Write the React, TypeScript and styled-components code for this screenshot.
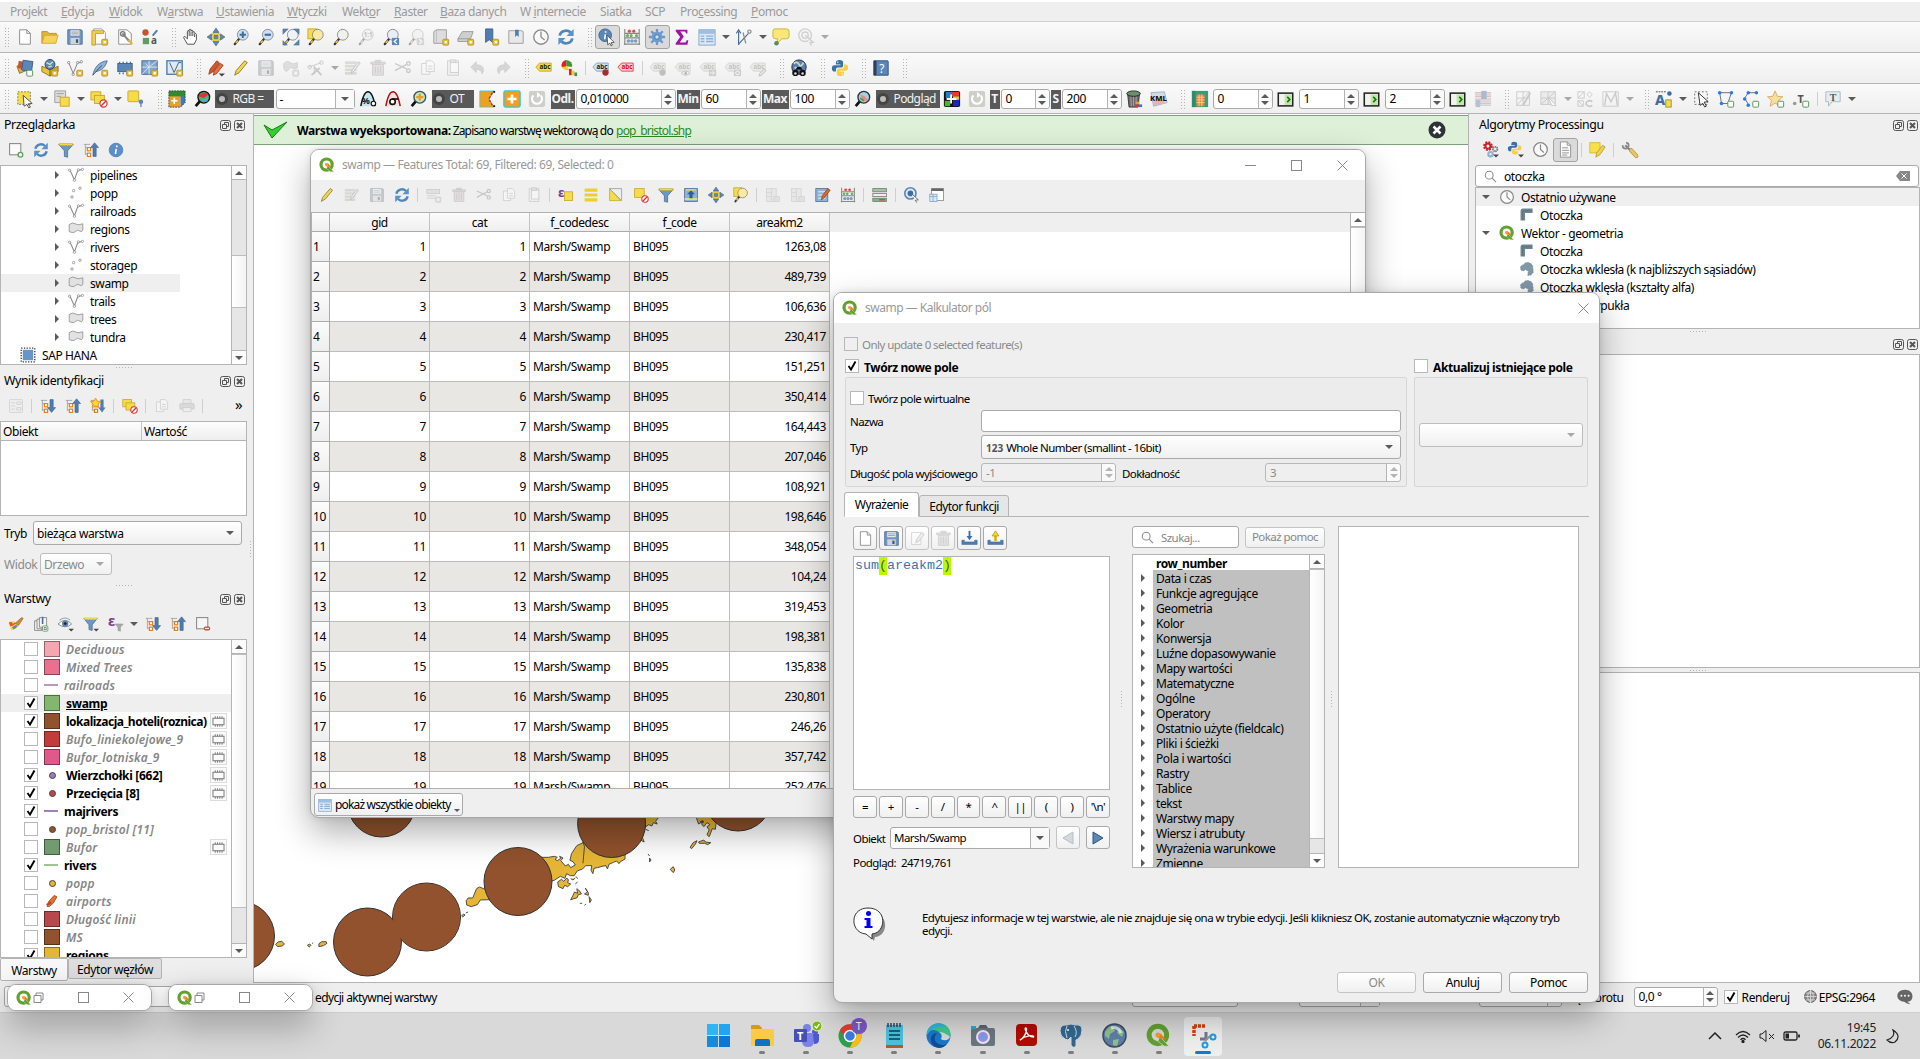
import React, { ReactNode } from 'react';
import styled, { createGlobalStyle, css } from 'styled-components';

const Global = createGlobalStyle`
  *, *::before, *::after { box-sizing: border-box; }
  body { margin: 0; background: #fff; overflow: hidden; }
  #root { font: 12px/18px "Noto Sans", "Liberation Sans", sans-serif; letter-spacing: -0.4px; color: #000; }
  svg { display: block; flex: none; }
  svg text { letter-spacing: 0; }
`;

/* ---------- icons ---------- */

const Lens = ({ fill = '#d9e6f3', children }: { fill?: string; children?: ReactNode }) => (
  <g>
    <path d="M8 12L3 18" stroke="#333" strokeWidth="2.4" strokeLinecap="round" />
    <path d="M6.4 14L4.2 16.6" stroke="#e8c33c" strokeWidth="1.8" />
    <circle cx="12" cy="7.5" r="6" fill={fill} stroke="#888" />
    {children}
  </g>
);
const Badge = ({ c = '#e8c33c', b = '#b3922a' }: { c?: string; b?: string }) => (
  <g>
    <rect x="12" y="12.5" width="6.5" height="6.5" rx="1" fill={c} stroke={b} />
    <rect x="14" y="14.5" width="2.5" height="2.5" fill="#fff" />
  </g>
);
const GreenBadge = () => <Badge c="#fff" b="#4f8f4f" />;
const Caret = () => <path d="M13 16h7l-3.5 3.5z" fill="#444" />;
const TagIcon = ({ fill, stroke, color = '#222', children }: { fill: string; stroke: string; color?: string; children?: ReactNode }) => (
  <g>
    <path d="M1 9l4-4.5h13v9H5z" fill={fill} stroke={stroke} />
    <text x="5" y="11.6" fontSize="7" fontWeight="700" fill={color} fontFamily="Noto Sans, sans-serif">abc</text>
    {children}
  </g>
);
const TreeLines = () => (
  <g>
    <path d="M3 3v13M3 7h5M3 15h5" stroke="#999" fill="none" />
    <path d="M1 3h8" stroke="#999" />
    <rect x="5.5" y="7" width="4" height="4" fill="#fff" stroke="#e8821e" strokeWidth="1.5" />
    <rect x="5.5" y="14" width="4" height="4" fill="#fff" stroke="#e8821e" strokeWidth="1.5" />
  </g>
);
const Circ3 = () => (
  <g fill="#fff" stroke="#888">
    <circle cx="8" cy="17" r="1.3" /><circle cx="3" cy="4" r="1.3" /><circle cx="13" cy="4" r="1.3" /><circle cx="17" cy="3" r="1.3" />
  </g>
);

const icons: Record<string, ReactNode> = {
  new: <path d="M4 2h8l4 4v12H4zM12 2v4h4" fill="#fff" stroke="#888" />,
  open: <g><path d="M1 17V4h6l2 2h8v3" fill="#e0b53a" stroke="#b98f20" /><path d="M1 17l3-9h15l-2.5 9z" fill="#f6d25e" stroke="#d2a735" /></g>,
  save: <g><path d="M2 2h15l1 1v15H2z" fill="#6d97c4" stroke="#4c6e94" /><rect x="5" y="2.5" width="10" height="6" fill="#e8e8e8" /><path d="M6 4.5h8M6 6.5h8" stroke="#999" /><rect x="5" y="11" width="10" height="7" fill="#cfd5db" /><rect x="11" y="12.5" width="2.5" height="4" fill="#456" /></g>,
  layout: <g><path d="M3 1h9l4 4v13H3z" fill="#fff" stroke="#999" /><path d="M1 3h13v3H5v13H1z" fill="#f3d052" stroke="#c69b28" /><Badge /></g>,
  layouts: <g><path d="M3 2h9l5 4v12H3z" fill="#fff" stroke="#888" /><path d="M7 6l8 9" stroke="#888" strokeWidth="2.4" /><path d="M14 13l4 5" stroke="#e2b83a" strokeWidth="2.6" /><circle cx="7.5" cy="6.5" r="2.5" fill="none" stroke="#777" strokeWidth="1.5" /></g>,
  style: <g><circle cx="5" cy="5" r="3.5" fill="#c9532c" /><path d="M12 8l5-6 2 1-5 6z" fill="#5b7ea6" /><rect x="2" y="11" width="7" height="7" fill="#5f9c5f" /><text x="11" y="18" fontSize="11" fontWeight="700" fill="#555" fontFamily="Noto Sans, sans-serif">a</text></g>,
  hand: <path d="M6 18l-4-7c-.8-1.6 1-2 1.8-1L6 12V4c0-1.600 2-1.600 2 0V2.500c0-1.500 2-1.500 2 0V3.500c0-1.500 2-1.400 2 0V5c0-1.300 2-1.200 2 0l2 2v6l-2.500 5zM8 4v5M10 4v5M12 5v4M14 6v4" fill="#fff" stroke="#333" strokeWidth=".9" />,
  pan: <g><path d="M10 3l7 7-7 7-7-7z" fill="#f3d438" stroke="#c69b28" /><g fill="#5b86b8" stroke="#3f628a" strokeWidth=".6"><path d="M10 0l3.500 5h-7zM10 20l3.500-5h-7zM0 10l5-3.500v7zM20 10l-5-3.500v7z" /><path d="M8 8h4v4H8z" /></g></g>,
  zin: <Lens fill="#cfe0f2"><path d="M12 4v7M8.500 7.500h7" stroke="#3c6ea5" strokeWidth="2.200" /></Lens>,
  zout: <Lens fill="#cfe0f2"><path d="M8.500 7.500h7" stroke="#3c6ea5" strokeWidth="2.400" /></Lens>,
  zfull: <g><Lens fill="#eef3f8" /><g fill="#5b86b8" stroke="#3f628a" strokeWidth=".5"><path d="M1 1h6L1 7zM19 1v6l-6-6zM19 19h-6l6-6zM1 19v-5l5 5z" /></g></g>,
  zsel: <g><rect x="1" y="1" width="10" height="11" fill="#f4dc4a" stroke="#c9a52c" /><Lens fill="#faeaa0" /></g>,
  zlayer: <Lens fill="#f1f1ec" />,
  znat: <Lens fill="#eee"><text x="7.500" y="10" fontSize="7" fontWeight="700" fill="#666" fontFamily="Noto Sans, sans-serif">1:1</text></Lens>,
  zlast: <g><Lens fill="#e8eef3" /><rect x="11" y="11" width="8" height="8" fill="#5b86b8" /><path d="M16.500 12.500l-3 2.500 3 2.500" stroke="#fff" strokeWidth="1.400" fill="none" /></g>,
  znext: <g><Lens fill="#eee" /><rect x="11" y="11" width="8" height="8" fill="#aaa" /><path d="M13.500 12.500l3 2.500-3 2.500" stroke="#fff" strokeWidth="1.400" fill="none" /></g>,
  newmap: <g><path d="M2 4l3-2h11v13l-2 2H2z" fill="#ddd" stroke="#999" /><path d="M5 2v14" stroke="#bbb" /><Badge /></g>,
  new3d: <g><path d="M1 12L6 4h12l-3 8zM1 12v3h14v-3" fill="#cfcfcf" stroke="#999" /><Badge /></g>,
  bmadd: <g><path d="M4 1h8v15l-4-3-4 3z" fill="#4f7db0" stroke="#3b6190" /><Badge /></g>,
  bm: <g><path d="M2 3h14l2 1v13H2z" fill="#e8e8e8" stroke="#999" /><path d="M9 2h4v8l-2-2-2 2z" fill="#4f7db0" /></g>,
  clock: <g fill="none" stroke="#888"><circle cx="10" cy="10" r="8" fill="#fafafa" strokeWidth="1.500" /><path d="M10 4v6l4 3.500" strokeWidth="1.400" /></g>,
  refresh: <g fill="none" stroke="#4f86bd" strokeWidth="3"><path d="M3 8.500A7 6.500 0 0 1 15 5" /><path d="M17 11.500A7 6.500 0 0 1 5 15" /><path d="M18.500 1v8h-8z" fill="#5b92cb" stroke="none" /><path d="M1.500 19v-8h8z" fill="#5b92cb" stroke="none" /></g>,
  identify: <g><circle cx="8" cy="8" r="7" fill="#5b86b8" stroke="#3f628a" /><path d="M8.500 3.500v1.800M8.200 7l-.8 5.500" stroke="#fff" strokeWidth="1.800" /><path d="M10 8l8 8-3.500.3L16 19l-1.500.8-1.400-3-2.300 2z" fill="#fff" stroke="#333" strokeWidth=".8" /></g>,
  abacus: <g><path d="M2 1v18M18 1v18M2 6h16M2 11h16M1 18h18" stroke="#888" strokeWidth="1.300" /><g fill="#d94b43"><circle cx="7" cy="3.500" r="1.700" /><circle cx="12" cy="3.500" r="1.700" /></g><g fill="#6bb06b"><circle cx="5" cy="8.500" r="1.700" /><circle cx="9" cy="8.500" r="1.700" /><circle cx="15" cy="8.500" r="1.700" /></g><g fill="#7b9bc0"><circle cx="6" cy="14.500" r="2" /><circle cx="10" cy="14.500" r="2" /><circle cx="14" cy="14.500" r="2" /></g></g>,
  gear: <g><path d="M10 1v18M1 10h18M3.600 3.600l12.800 12.800M16.400 3.600L3.600 16.400" stroke="#6d97c8" strokeWidth="2.600" /><circle cx="10" cy="10" r="6" fill="#6d9cd0" /><circle cx="10" cy="10" r="2.500" fill="#cfe0f2" stroke="#47719f" /></g>,
  sigma: <path d="M3 2h13v4h-1.500l-1-2H8l4 5.500L7.500 16H14l1.200-2.500H17L16 18.500H3V17l5-7-5-6.500z" fill="#a012a0" />,
  table: <g><rect x="1" y="2" width="18" height="17" fill="#dbe9f7" stroke="#7fa3c8" /><rect x="1" y="2" width="18" height="4.500" fill="#9cc0e4" /><path d="M3 9h4M9 9h8M3 12h4M9 12h8M3 15h4M9 15h8" stroke="#8bb0d6" strokeWidth="1.600" /></g>,
  measure: <g fill="none" stroke="#4c6e94" strokeWidth="1.300"><path d="M4 19V4M1.500 6L4 2l2.500 4" /><path d="M4 18l11-12" /><path d="M9 5l3 12" stroke="#888" /><circle cx="16" cy="4" r="1.800" stroke="#888" /></g>,
  bubble: <g><path d="M3 1h13q3 0 3 3v5q0 3-3 3h-5l-5 5v-5H4q-3 0-3-3V4q0-3 2-3z" fill="#f9e878" stroke="#c9ae35" /><circle cx="5" cy="17" r="2.500" fill="#5a8a5a" /></g>,
  pin: <g fill="none" stroke="#999" strokeWidth="1.500"><circle cx="9" cy="8" r="7" /><circle cx="9" cy="8" r="3.500" /><path d="M9 8l9 8-3.500.5L16 19.500" fill="#eee" /></g>,
  data: <g><path d="M1 8l9-5 3 9-9 4z" fill="#e0b53a" stroke="#8e6c20" /><path d="M3 2l8 2-1 8-8-2z" fill="#c9532c" /><rect x="7" y="2" width="11" height="11" fill="#5b86b8" stroke="#3f628a" transform="rotate(8 12 8)" /><GreenBadge /></g>,
  gpkg: <g><path d="M1 8l9 4v7l-9-5z" fill="#e8c33c" stroke="#8e6c20" /><path d="M10 12l9-4v6l-9 5z" fill="#d2a735" stroke="#8e6c20" /><circle cx="10" cy="6" r="5.500" fill="#5b86b8" stroke="#345" /><path d="M6 4l4 2 3-3M8 9l4-1" stroke="#cfe3c0" strokeWidth="1.500" fill="none" /><Badge /></g>,
  vline: <g><path d="M3 4l5 12 5-12h4" fill="none" stroke="#777" /><Circ3 /><Badge /></g>,
  feather: <g><path d="M2 18C4 9 9 3 18 2c-2 7-6 11-13 12" fill="#8fb2d6" stroke="#4c6e94" /><path d="M2 18L12 7" stroke="#345" /><Badge /></g>,
  chip: <g><path d="M4 5v-2M8 5v-2M12 5v-2M16 5v-2M4 15v2M8 15v2M12 15v2" stroke="#456f9f" strokeWidth="1.500" /><rect x="2" y="5" width="16" height="9" fill="#5b86b8" stroke="#3f628a" /><Badge /></g>,
  mesh: <g><rect x="1" y="2" width="17" height="15" fill="#7fa6d0" stroke="#3f628a" /><path d="M1 9h17M9 2v15M1 17l8-8M9 9l9-7M9 9L5 5" stroke="#dce9f6" strokeWidth="1" /><Badge /></g>,
  vvirt: <g><rect x="1" y="2" width="17" height="15" fill="#dce9f6" stroke="#4c7cb0" strokeWidth="1.500" /><path d="M4 4l5 11 5-11h3" fill="none" stroke="#456" /><Badge /></g>,
  pencils: <g><path d="M2 17l1.500-6L11 2l3 2.500L7 14z" fill="#d9542a" stroke="#7e2f16" strokeWidth=".8" /><path d="M7 18l1-5 7-8 3 2-7 9z" fill="#e8703a" stroke="#7e2f16" strokeWidth=".8" /><Caret /></g>,
  pencil: <path d="M3 18l1.500-5L14 2l3 2L8 15z" fill="#f0d650" stroke="#8b7a2a" />,
  blob: <g><path d="M2 5q4-4 7-1t8 0v6q-3 2-5 0t-5 2-5-2z" fill="#bbb" stroke="#999" /><Badge c="#ccc" b="#999" /></g>,
  vertex: <g stroke="#888" fill="none"><path d="M2 9l14-5M8 7v10" /><circle cx="3" cy="9" r="2" /><circle cx="16" cy="4" r="2" /><path d="M5 18l9-8M8 9l8 9" strokeWidth="2" /></g>,
  listedit: <g><path d="M1 4h13M1 8h13M1 12h13M1 16h13" stroke="#bdb58c" strokeWidth="3" /><path d="M8 16l1-4 7-9 2 1.500-7 9z" fill="#ddd" stroke="#777" /></g>,
  addrow: <g><rect x="1" y="3" width="16" height="5" fill="#ccc" stroke="#999" /><path d="M1 11h11M1 14h11" stroke="#bbb" strokeWidth="2" /><Badge c="#ccc" b="#999" /></g>,
  trash: <g fill="#d8c4c4" stroke="#a88"><path d="M4 6h12v12H4z" /><path d="M2 3.500h16v2H2zM7 1.500h6v2H7z" /><path d="M7 8v8M10 8v8M13 8v8" /></g>,
  cut: <g fill="none" stroke="#888" strokeWidth="1.500"><path d="M1 5l13 6M1 13l13-7" /><circle cx="16" cy="5" r="2" /><circle cx="16" cy="13" r="2" /></g>,
  copy: <g fill="#fff" stroke="#999"><path d="M3 5h6l3 3v9H3z" /><path d="M8 2h6l3 3v9H8z" /><path d="M10 8h5M10 11h5" /></g>,
  paste: <g fill="#eee" stroke="#999"><rect x="4" y="2" width="12" height="16" /><rect x="7" y="4" width="9" height="11" fill="#fff" /><rect x="7" y="1" width="6" height="3" fill="#ccc" /></g>,
  undo: <path d="M8 3v3.500q9 0 8 7l-1.500 3q-.5-5-6.500-5V15L2 9z" fill="#a8a8a8" stroke="#999" />,
  redo: <path d="M12 3v3.500q-9 0-8 7l1.500 3q.5-5 6.500-5V15l6-6z" fill="#a8a8a8" stroke="#999" />,
  abc: <TagIcon fill="#f6dc4a" stroke="#c9a52c" />,
  pie: <g><path d="M7 1a6 6 0 0 0-5 8l5 2z" fill="#d22" /><path d="M7 1a7 6 0 0 1 6 8l-6-1z" fill="#3a9a3a" /><path d="M2 9l5-1 4 4q-6 2-9-3z" fill="#f2cf3a" /><rect x="10" y="11" width="3" height="7" fill="#d22" /><rect x="13" y="13" width="3" height="5" fill="#f2cf3a" /><rect x="16" y="15" width="3" height="4" fill="#3a9a3a" /></g>,
  abcb: <TagIcon fill="#cfe0f5" stroke="#7f9fc8"><circle cx="15" cy="15" r="3.500" fill="#b02a2a" /></TagIcon>,
  abcr: <TagIcon fill="#ffd0d0" stroke="#e04040" color="#d11" />,
  abc1: <TagIcon fill="#ddd8c8" stroke="#aaa" color="#777"><circle cx="15" cy="15" r="3.500" fill="#a66" /></TagIcon>,
  abc2: <TagIcon fill="#ddd8c8" stroke="#aaa" color="#777"><path d="M8 16q5-5 10 0-5 4-10 0" fill="#fff" stroke="#777" /><circle cx="13" cy="16" r="1.500" fill="#555" /></TagIcon>,
  abc3: <TagIcon fill="#ddd8c8" stroke="#aaa" color="#777"><rect x="11" y="12" width="8" height="7" fill="#999" /><path d="M12 15.500h5M15 13.500l2 2-2 2" stroke="#fff" fill="none" /></TagIcon>,
  abc4: <TagIcon fill="#ddd8c8" stroke="#aaa" color="#777"><rect x="11" y="12" width="8" height="7" fill="#999" /><circle cx="15" cy="15.500" r="2" stroke="#fff" fill="none" /></TagIcon>,
  abc5: <TagIcon fill="#ddd8c8" stroke="#aaa" color="#777"><path d="M11 19l1-3 5-5 2 2-5 5z" fill="#ccc" stroke="#777" /></TagIcon>,
  globeb: <g><circle cx="10" cy="9" r="8" fill="#5b7fae" stroke="#223" /><path d="M4 5q4-3 6 1t5-2M5 10q3-1 5 2" stroke="#cfd8c8" strokeWidth="2" fill="none" /><circle cx="6" cy="15.500" r="3.500" fill="#111" /><circle cx="14" cy="15.500" r="3.500" fill="#111" /><path d="M6 12l2-3h4l2 3" fill="#111" /><circle cx="6" cy="16" r="1.400" fill="#ddd" /><circle cx="14" cy="16" r="1.400" fill="#ddd" /></g>,
  python: <g><path d="M9.500 1q-4 0-4 3v2h5v1H3.500Q1 7 1 10.500T4 14h1.500v-2.500q0-2 2-2h4q2 0 2-2V4q0-3-4-3z" fill="#3b72a6" /><path d="M10.500 19q4 0 4-3v-2h-5v-1h7q2.500 0 2.500-3.500T16 6h-1.500v2.500q0 2-2 2h-4q-2 0-2 2V16q0 3 4 3z" fill="#f6cf45" /><circle cx="7.500" cy="3.500" r=".8" fill="#fff" /><circle cx="12.500" cy="16.500" r=".8" fill="#fff" /></g>,
  help: <g><path d="M2 2h15q1 0 1 1v15H2z" fill="#5b86b8" stroke="#2f4f77" /><path d="M2 2h3v16H2z" fill="#2f3f55" /><text x="8" y="15" fontSize="13" fill="#fff" fontFamily="Noto Sans, sans-serif">?</text></g>,
  select: <g><rect x="2" y="2" width="14" height="14" fill="#f4dc4a" stroke="#777" strokeDasharray="2 1.500" /><path d="M8 6l10 9-4.500.4L16 19l-1.800.8-2-3.800L9 18z" fill="#fff" stroke="#333" strokeWidth=".9" /></g>,
  form: <g><path d="M2 1h12v13H2z" fill="#ddd" stroke="#999" /><path d="M4 4h8M4 7h5" stroke="#999" /><rect x="8" y="8" width="10" height="10" fill="#f4dc4a" stroke="#c9a52c" /></g>,
  desel: <g><rect x="1" y="2" width="11" height="9" fill="#f4dc4a" stroke="#c9a52c" /><rect x="5" y="6" width="11" height="9" fill="#f4dc4a" stroke="#c9a52c" /><circle cx="15" cy="15" r="4" fill="#fff" stroke="#d33" strokeWidth="1.300" /><path d="M12.500 17.500l5-5" stroke="#d33" strokeWidth="1.500" /></g>,
  selpin: <g><rect x="1" y="1" width="12" height="12" rx="1" fill="#f4dc4a" stroke="#c9a52c" /><circle cx="15.500" cy="13" r="2.500" fill="#5b86b8" /><path d="M15.500 15v4" stroke="#5b86b8" strokeWidth="1.500" /></g>,
  scpa: <g><path d="M1 1h18v7H1z" fill="#2e8b2e" /><path d="M1 7h13v12H1z" fill="#e8a02a" /><path d="M14 7h5v7l-5 5z" fill="#3a7ac0" /><path d="M3.500 12h7M7 8.500v7" stroke="#fff" strokeWidth="1.800" /><path d="M1 19V1h18v13l-5 5z" fill="none" stroke="#444" strokeDasharray="2 1" /></g>,
  scpb: <g><path d="M8 12L3 18" stroke="#111" strokeWidth="3" /><circle cx="12" cy="8" r="6.500" fill="#4db36b" stroke="#111" strokeWidth="1.500" /><path d="M6 7q6-7 11-2l-5 4z" fill="#d33" /><path d="M9 12l7 1 1-5z" fill="#5aa7e0" /></g>,
  scpc: <g><path d="M2 18Q5 2 10 2t8 16" fill="#bfe6f5" stroke="#111" strokeWidth="1.600" /><text x="3" y="16" fontSize="10" fontWeight="700" fill="#111" fontFamily="Noto Sans, sans-serif">%</text><circle cx="16" cy="15" r="2.500" fill="#fff" stroke="#111" strokeWidth="1.300" /></g>,
  scpd: <g><path d="M2 18Q5 2 10 2t8 16" fill="#ffe0e0" stroke="#a11" strokeWidth="1.600" /><circle cx="9.500" cy="13" r="3" fill="#fff" stroke="#111" strokeWidth="1.800" /><path d="M9 10h7" stroke="#111" strokeWidth="1.800" /></g>,
  scpe: <g><path d="M8 12L3 18" stroke="#111" strokeWidth="3" /><circle cx="12" cy="8" r="6.500" fill="#c8e8c0" stroke="#356" strokeWidth="1.500" /><path d="M12 4v8M8 8h8" stroke="#e8a02a" strokeWidth="2.500" /></g>,
  roi: <g><path d="M2 1h16l-6 9 6 9H2z" fill="#f0a020" stroke="#28c8e8" strokeWidth=".8" /><path d="M16 3l-4 7 4 7" fill="none" stroke="#d22" strokeWidth="1.500" strokeDasharray="3 1.500" /><path d="M18 1v2M18 17v2" stroke="#111" strokeWidth="2" /></g>,
  plus: <g><rect x="1" y="1" width="18" height="18" rx="2" fill="#f0a020" stroke="#28c8e8" strokeWidth="1.500" /><path d="M10 5v10M5 10h10" stroke="#fff" strokeWidth="3" /></g>,
  redoG: <g><rect x="1" y="1" width="18" height="18" rx="2" fill="#cfcfca" /><path d="M6 6a5.500 5.500 0 1 0 8 0" fill="none" stroke="#fff" strokeWidth="2.500" /><path d="M10 2v7l4-3.500z" fill="#fff" /></g>,
  lens2: <g><path d="M8 12L3 18" stroke="#111" strokeWidth="3" /><circle cx="12" cy="8" r="6.500" fill="#9fd3e8" stroke="#333" strokeWidth="1.500" /><path d="M8 5l5 2 4 4-6 2z" fill="#e88" /><path d="M8 9l4 3" stroke="#3a3" strokeWidth="2" /></g>,
  mosaic: <g><rect x="1" y="1" width="18" height="18" rx="2" fill="#111" /><rect x="3" y="2" width="7" height="7" fill="#2a7ad0" /><rect x="10" y="2" width="8" height="5" fill="#e33" /><rect x="2" y="12" width="6" height="6" fill="#4b2" /><rect x="11" y="11" width="7" height="7" fill="#22b" /><path d="M11 7h7v4h-7z" fill="#eb2" /><path d="M9 5v10M4 10h11" stroke="#fff" strokeWidth="2" /></g>,
  bin: <g><path d="M3 5h13l-1.500 14h-10z" fill="#6a6a6a" stroke="#333" /><path d="M6.500 7l.5 11M9.500 7v11M12.500 7l-.5 11" stroke="#aaa" /><ellipse cx="9.500" cy="4" rx="7.500" ry="3" fill="#6a8f6a" stroke="#222" /><path d="M12 13h4v3h-4z" fill="#e8a02a" /><path d="M15 16h4v3h-4z" fill="#2a7ad0" /><path d="M11 16h4v3h-4z" fill="#d33" /></g>,
  kml: <g><path d="M1 3l15-1 3 12-15 4z" fill="#cfdde6" stroke="#aab" /><path d="M4 13l12-3v5l-11 2z" fill="#e8b0b0" /><text x="0" y="12.500" fontSize="8.500" fontWeight="800" fill="#111" fontFamily="Noto Sans, sans-serif">KML</text></g>,
  raster: <g><rect x="1" y="1" width="18" height="18" fill="#3a9a7a" /><rect x="6" y="5" width="9" height="13" fill="#e8803a" /><path d="M6 8h9M6 11h9M6 14h9M9 5v13M12 5v13" stroke="#fbe3a0" strokeWidth=".8" /><rect x="1" y="1" width="4" height="18" fill="#2e8b6e" /></g>,
  term: <g><rect x="1.500" y="2.500" width="17" height="15" fill="#f2f2ee" stroke="#222" strokeWidth="1.800" /><rect x="9" y="4" width="8.500" height="12.500" fill="#bfe8a8" /><path d="M12 7l3 3-3 3" stroke="#171" strokeWidth="2" fill="none" /></g>,
  flag: <g opacity=".55"><path d="M1 3h18M1 7h18M1 11h18M1 15h18" stroke="#c99" strokeWidth="1.600" /><path d="M1 5h18M1 9h18M1 13h18M1 17h18" stroke="#bbc" strokeWidth="1.600" /><rect x="8" y="1" width="6" height="9" fill="#6b8bb0" /><rect x="2" y="11" width="5" height="8" fill="#8a9ab0" /></g>,
  meshe: <g stroke="#888" fill="none"><rect x="2" y="2" width="14" height="15" /><path d="M2 9h14M9 2v15M2 17L16 2" /><path d="M9 17l8-14" stroke="#b77" strokeWidth="2" /></g>,
  meshs: <g stroke="#888" fill="#ddd"><rect x="1" y="2" width="16" height="14" /><path d="M1 9h16M9 2v14M1 16L17 2" /><path d="M9 8l9 9-5 .5z" fill="#fff" /></g>,
  meshc: <g stroke="#888" fill="none"><rect x="1" y="2" width="7" height="7" /><path d="M1 9l7-7M11 5l3-3 3 3-3 3zM1 12h6v6H1zM1 12l6 6" /><path d="M17 13a4 3 0 1 0 0 4" strokeWidth="1.800" /></g>,
  meshw: <g stroke="#888" fill="none"><rect x="1" y="2" width="17" height="16" /><path d="M3 17L5 4l5 9 5-10 2 14" strokeWidth="1.500" /></g>,
  annA: <g><text x="0" y="17" fontSize="16" fontWeight="800" fill="#3c6ea5" fontFamily="Noto Sans, sans-serif">A</text><path d="M1 2h12" stroke="#444" strokeDasharray="2 1" /><circle cx="16" cy="4" r="2.500" fill="#3c6ea5" /><rect x="12" y="11" width="6" height="8" fill="#f4dc4a" stroke="#a88a20" /></g>,
  annS: <g><rect x="3" y="2" width="14" height="14" fill="none" stroke="#666" strokeDasharray="2 2" /><path d="M7 3l11 10-4.500.5L16 18l-2 .8-2-4L9 17z" fill="#fff" stroke="#222" /></g>,
  annP: <g><path d="M3 3h13l-4 12H5z" fill="none" stroke="#666" /><g fill="#2a7ae8"><circle cx="3" cy="3" r="2" /><circle cx="16" cy="3" r="2" /><circle cx="5" cy="15" r="2" /></g><GreenBadge /></g>,
  annL: <g><path d="M16 3H7L3 9l4 7" fill="none" stroke="#666" /><g fill="#2a7ae8"><circle cx="16" cy="3" r="2" /><circle cx="7" cy="3" r="2" /><circle cx="3" cy="10" r="2" /><circle cx="7" cy="17" r="2" /></g><GreenBadge /></g>,
  annM: <g><path d="M9 1l2.500 6 6 .500-4.500 4 1.500 6.500L9 14.500 3.500 18 5 11.500l-4.500-4 6-.500z" fill="#f7dfa0" stroke="#d9a860" /><GreenBadge /></g>,
  annT: <g><text x="6" y="14" fontSize="12" fontWeight="700" fill="#555" fontFamily="Noto Sans, sans-serif">T</text><circle cx="3" cy="15" r="2" fill="#999" /><GreenBadge /></g>,
  annB: <g><path d="M2 2h16v11H9l-4 5v-5H2z" fill="#e4eef2" stroke="#aab8c0" /><text x="6.500" y="12" fontSize="11" fontWeight="700" fill="#555" fontFamily="Liberation Serif, serif">T</text></g>,
  addsel: <g><rect x="2" y="2" width="14" height="14" fill="#fafafa" stroke="#888" strokeWidth="1.300" /><circle cx="15.500" cy="16" r="3" fill="#fff" stroke="#5f9c5f" strokeWidth="1.600" /></g>,
  filter: <g><path d="M1 3h18l-7 8v8l-4-1v-7z" fill="#6d97c4" stroke="#4c6e94" /><path d="M1.500 2h17v2.500h-17z" fill="#f4dc4a" stroke="#b3992a" strokeWidth=".6" /></g>,
  filterd: <g><path d="M1 3h17l-6.500 8v7l-4-1v-6z" fill="#6d97c4" stroke="#4c6e94" /><path d="M1.500 2h16v2.500h-16z" fill="#f4dc4a" /><Caret /></g>,
  collapse: <g><TreeLines /><path d="M14.500 1l5 6h-3v11h-4V7h-3z" fill="#4f7db0" stroke="#345d8c" strokeWidth=".7" /></g>,
  expand: <g><TreeLines /><path d="M14.500 18l5-6h-3V2h-4v10h-3z" fill="#4f7db0" stroke="#345d8c" strokeWidth=".7" /></g>,
  expandnew: <g><TreeLines /><path d="M15 18l4.500-6H17V2h-4v10h-2.500z" fill="#4f7db0" /><path d="M7 0l2 4 4.500.500-3.500 3 1 4.500-4-2.500L3 12l1-4.500L.5 4.500 5 4z" fill="#ffd82a" stroke="#e88a1a" /></g>,
  info: <g><circle cx="10" cy="10" r="8.500" fill="#5b8fc8" stroke="#4b7ab0" /><path d="M11 4.500v2M10.300 8.500L9.300 15" stroke="#fff" strokeWidth="2" /></g>,
  formv: <g fill="none" stroke="#999"><rect x="2" y="2" width="16" height="16" rx="1" /><path d="M4 6h5M4 10h5M4 14h5M11 5h5v3h-5zM11 12h5v3h-5z" /></g>,
  print: <g fill="#bbb" stroke="#999"><path d="M5 2h10v5H5z" fill="#ddd" /><rect x="1" y="7" width="18" height="7" rx="1" /><path d="M5 12h10v5H5z" fill="#eee" /></g>,
  brush: <g><path d="M1 9l6-3 6 5-3 5-6 2z" fill="#f4dc4a" /><path d="M1 8l3-1 3 4-4 2z" fill="#e05a3a" /><path d="M5 14l5-3 2 2-5 4z" fill="#5b86b8" /><path d="M4 12l5-3" stroke="#e05a3a" strokeWidth="2" /><path d="M9 9l8-7 2 1-6 9z" fill="#c98b3c" stroke="#8e5c20" strokeWidth=".7" /></g>,
  addgrp: <g fill="#f4f4f4" stroke="#777"><path d="M2 6h9v12H2z" /><path d="M5 4h9v12H5z" /><path d="M8 2h9v12H8z" /><path d="M12 1v9" strokeWidth="2" stroke="#4c6e94" /><GreenBadge /></g>,
  eye: <g><path d="M0 10q9-9 17 0-8 7-17 0z" fill="#fff" stroke="#777" /><circle cx="9" cy="9.500" r="4" fill="#5b86b8" /><circle cx="9" cy="9.500" r="1.800" fill="#222" /><path d="M2 5q7-5 13 0" fill="none" stroke="#888" /><Caret /></g>,
  eps: <g><text x="0" y="13" fontSize="18" fontWeight="700" fill="#7b3f8c" fontFamily="Noto Sans, sans-serif">ε</text><path d="M9 10h10l-3.500 4v5l-3-1v-4z" fill="#aaa" stroke="#888" strokeWidth=".6" /></g>,
  rmgrp: <g><rect x="2" y="2" width="14" height="14" fill="#f6f6f6" stroke="#888" strokeWidth="1.300" /><rect x="11" y="13" width="8" height="5" rx="2" fill="#e04a4a" /><path d="M12.500 15.500h5" stroke="#fff" strokeWidth="1.300" /></g>,
  epsY: <g><rect x="8" y="6" width="10" height="11" fill="#f4dc4a" stroke="#c9a52c" /><text x="0" y="12" fontSize="16" fontWeight="700" fill="#7b3f8c" fontFamily="Noto Sans, sans-serif">ε</text></g>,
  rows: <path d="M2 4h16M2 10h16M2 16h16" stroke="#ecd02e" strokeWidth="4" />,
  invert: <g><path d="M2 2v15h14z" fill="#f4dc4a" stroke="#c9a52c" /><path d="M2 2h15v15z" fill="#eee" stroke="#999" /></g>,
  desel2: <g><rect x="2" y="2" width="12" height="11" fill="#f4dc4a" stroke="#c9a52c" /><circle cx="15" cy="15" r="4" fill="#fff" stroke="#d33" strokeWidth="1.300" /><path d="M12.500 17.500l5-5" stroke="#d33" strokeWidth="1.500" /></g>,
  moveup: <g><rect x="2" y="2" width="16" height="16" fill="#8fb2d6" stroke="#4c6e94" /><path d="M2 15h16" stroke="#e8d77c" strokeWidth="2.500" /><path d="M10 4l5 5h-3v5H8V9H5z" fill="#2f5f96" /><path d="M4 3.500h12" stroke="#f4dc4a" strokeWidth="1.500" /></g>,
  colnew: <g fill="#ddd" stroke="#aaa"><rect x="2" y="2" width="12" height="16" /><path d="M8 2v16M2 7h6M2 12h6" /><rect x="11" y="12" width="7" height="6" fill="#ccb" /></g>,
  editcol: <g><rect x="1" y="2" width="15" height="16" fill="#8fb2d6" stroke="#4c6e94" /><path d="M4 6h9M4 10h9M4 14h9" stroke="#fff" /><path d="M8 16l1-5 7-9 3 2-7 9z" fill="#e0662a" stroke="#7e3b16" strokeWidth=".8" /></g>,
  cond: <g><rect x="1" y="2" width="17" height="4" fill="#9fc79f" stroke="#777" /><rect x="1" y="8" width="17" height="4" fill="#eee" stroke="#777" /><rect x="1" y="14" width="17" height="4" fill="#7fb87f" stroke="#777" /><path d="M9 16h7" stroke="#d44" strokeWidth="2" /></g>,
  action: <g><circle cx="8" cy="8" r="7" fill="#dce8f4" stroke="#5b86b8" strokeWidth="2" /><circle cx="8" cy="8" r="3.500" fill="#3c6ea5" /><path d="M9 8l9 8-4 .500 2 3" fill="#fff" stroke="#555" /></g>,
  dock: <g><rect x="3" y="2" width="15" height="15" fill="#fff" stroke="#888" /><path d="M3 3.500h15" stroke="#666" strokeWidth="3" /><rect x="1" y="9" width="9" height="9" fill="#dbe9f7" stroke="#7fa3c8" /><path d="M1 12h9M5 9v9" stroke="#7fa3c8" /></g>,
  gears: <g><circle cx="7" cy="6" r="4.200" fill="none" stroke="#c9202a" strokeWidth="3" strokeDasharray="2 1.300" /><circle cx="7" cy="6" r="3" fill="none" stroke="#c9202a" strokeWidth="2.400" /><circle cx="15.500" cy="9.500" r="2.600" fill="none" stroke="#777" strokeWidth="2.200" strokeDasharray="1.500 .6" /><circle cx="10" cy="15.500" r="2.600" fill="none" stroke="#8fb2d6" strokeWidth="2.500" /><Caret /></g>,
  pythond: <g><path d="M8 1Q5 1 5 3.500V5h4v1H4Q1 6 1 9t3 3h1V9.500Q5 8 7 8h3q2 0 2-2V3.500Q12 1 8 1z" fill="#3b72a6" /><path d="M10 16q3 0 3-2.500V12H9v-1h5q3 0 3-3t-3-3h-1v2.500Q13 9 11 9H8q-2 0-2 2v2.500Q6 16 10 16z" fill="#f6cf45" /><Caret /></g>,
  doc: <g><path d="M4 1h8l4 4v14H4z" fill="#fafafa" stroke="#888" /><path d="M12 1v4h4M6 8h7M6 11h8M6 14h8M6 16.500h6" stroke="#888" fill="none" /></g>,
  note: <g><rect x="1" y="2" width="12" height="12" fill="#f7e04a" stroke="#d2b52c" /><path d="M8 19l1-5 7-9 3 2-6 9z" fill="#f0d250" stroke="#a88a20" strokeWidth=".8" /></g>,
  wrench: <g><path d="M5 5l8 8" stroke="#888" strokeWidth="2.500" /><path d="M2 5a3.500 3.500 0 1 0 4-3" fill="none" stroke="#888" strokeWidth="2" /><path d="M12 11l6 6.500" stroke="#a88a40" strokeWidth="5" strokeLinecap="round" /><path d="M12 11l6 6.500" stroke="#e8c860" strokeWidth="3.500" strokeLinecap="round" /></g>,
  imp: <g><path d="M1 12v5h18v-5h-3v2H4v-2z" fill="#4f7db0" stroke="#3a6090" strokeWidth=".6" /><path d="M10 1v7" stroke="#3f6ea3" strokeWidth="2.200" /><path d="M6.500 7h7L10 12z" fill="#3f6ea3" /></g>,
  exp: <g><path d="M1 12v5h18v-5h-3v2H4v-2z" fill="#4f7db0" stroke="#3a6090" strokeWidth=".6" /><path d="M10 13V6" stroke="#d9b800" strokeWidth="3" /><path d="M6 7h8l-4-6z" fill="#f4dc2a" stroke="#a89000" strokeWidth=".8" /></g>,
  editnote: <g><path d="M3 3h11v14H3z" fill="#fff" stroke="#999" /><path d="M8 15l1-4 6-8 3 2-6 8z" fill="#ddd" stroke="#888" /></g>,
  buf: <g><path d="M4 18V4h14" fill="none" stroke="#6f8796" strokeWidth="6.500" strokeLinejoin="round" /><path d="M4 17V4h13" fill="none" stroke="#55705c" strokeWidth="1.200" /></g>,
  hull: <path d="M1 9q-1-4 4-5l3-3q7-1 10 4l1 10-4 4h-4l1-6-4-2-4 2-3-2z" fill="#8097a8" stroke="#72899b" strokeDasharray="3 1.500" />,
  poly: <path d="M1.500 4.500Q6 1 9 3.500t9.500 0v8q-1 3-4 1t-5 .500-6 1q-3 0-2-3z" fill="#e2e2e2" stroke="#8c8c8c" />,
  line: <g fill="none" stroke="#8c8c8c"><path d="M2.500 4L8 16l4-11 5-2" strokeWidth="1.300" /><g fill="#fff"><circle cx="2" cy="4" r="1.400" /><circle cx="8" cy="16.500" r="1.500" /><circle cx="13" cy="3.500" r="1.400" /><circle cx="18" cy="3" r="1.400" /></g></g>,
  point: <g fill="#fff" stroke="#8c8c8c"><circle cx="7" cy="7" r="1.500" /><circle cx="15" cy="4" r="1.500" /><circle cx="5" cy="15" r="1.500" /></g>,
  hana: <g><rect x="1.500" y="1.500" width="17" height="17" fill="none" stroke="#333" strokeWidth="1.600" strokeDasharray="1.600 1.800" /><rect x="3.500" y="3.500" width="13" height="13" fill="#6795c8" /></g>,
  memchip: <g fill="none" stroke="#777" strokeWidth="1.500"><rect x="1.500" y="5" width="17" height="10" /><path d="M5 5V2M8.500 5V2M12 5V2M15.500 5V2M5 15v3M8.500 15v3M12 15v3M15.500 15v3" /></g>,
  q: <g><circle cx="9.500" cy="9.500" r="7" fill="none" stroke="#62a032" strokeWidth="4" /><path d="M11 11l7.500 7.500h-4l-5-4z" fill="#62a032" stroke="#d9e8c8" strokeWidth=".5" /><path d="M8 8l4 .500 4 5-3-1-4-1z" fill="#f0801e" /><circle cx="9.500" cy="9.500" r="2" fill="#f0a030" /></g>,
  marker: <g><path d="M3 18l2-7L13 2l4 2-5 9-6 5z" fill="#e8702a" stroke="#7e3b16" /><path d="M6 11l3 3M2 15l5-1" stroke="#c93a1a" strokeWidth="2" /></g>,
  search: <g fill="none" stroke="#888" strokeWidth="1.600"><circle cx="8" cy="8" r="6" /><path d="M12.500 12.500l6 6" /></g>,
  globe: <g fill="#888" stroke="#555"><circle cx="10" cy="10" r="8" /><path d="M2 10h16M10 2v16M4 5.500h12M4 14.500h12M10 2q-8 8 0 16M10 2q8 8 0 16" fill="none" stroke="#eee" strokeWidth=".9" /></g>,
  chat: <g><path d="M10 1c12 0 12 15 3 15l4 3q-5 0-8-3C-3 15-2 1 10 1z" fill="#666" /><circle cx="5.500" cy="8.500" r="1.200" fill="#fff" /><circle cx="10" cy="8.500" r="1.200" fill="#fff" /><circle cx="14.500" cy="8.500" r="1.200" fill="#fff" /></g>,
};

const Svg = styled.svg<{ $off?: boolean }>`
  opacity: ${(p) => (p.$off ? 0.4 : 1)};
  filter: ${(p) => (p.$off ? 'grayscale(.8)' : 'none')};
  overflow: visible;
`;
const Icon = ({ n, s = 18, off }: { n: string; s?: number; off?: boolean }) => (
  <Svg width={s} height={s} viewBox="0 0 20 20" fill="none" $off={off}>{icons[n]}</Svg>
);

/* ---------- shared controls ---------- */

const Slot = styled.div<{ $w?: number; $on?: boolean }>`
  width: ${(p) => p.$w ?? 25}px;
  height: 24px;
  flex: none;
  display: flex;
  align-items: center;
  justify-content: center;
  ${(p) => p.$on && css`background: #dadada; border: 1px solid #a3a3a3; border-radius: 3px;`}
`;
const Spacer = styled.i<{ $h: number }>`
  height: ${(p) => p.$h}px;
  flex: none;
  display: block;
`;
const Tri = styled.i<{ $dir?: 'down' | 'up' | 'right'; $s?: number; $c?: string }>`
  width: 0;
  height: 0;
  flex: none;
  border: ${(p) => p.$s ?? 4}px solid transparent;
  ${(p) => p.$dir === 'up' && css`border-top: 0; border-bottom-color: ${p.$c ?? '#5a5a5a'};`}
  ${(p) => p.$dir === 'right' && css`border-right: 0; border-left-color: ${p.$c ?? '#5a5a5a'};`}
  ${(p) => (!p.$dir || p.$dir === 'down') && css`border-bottom: 0; border-top-color: ${p.$c ?? '#5a5a5a'};`}
`;
const Handle = styled.i<{ $first?: boolean }>`
  width: ${(p) => (p.$first ? 12.5 : 16)}px;
  height: 20px;
  flex: none;
  background: radial-gradient(circle, #b4b4b4 0.8px, transparent 1px) ${(p) => (p.$first ? 4 : 8)}px 0 / 3px 3px;
  background-clip: content-box;
  padding-left: ${(p) => (p.$first ? 4 : 8)}px;
  padding-right: ${(p) => (p.$first ? 4 : 3)}px;
`;
const Sep = styled.i`
  width: 7px;
  height: 14px;
  flex: none;
  background: linear-gradient(#cfcfcf, #cfcfcf) center / 1px 100% no-repeat;
`;
const field = css`
  background: #fff;
  border: 1px solid #a9a9a9;
  border-radius: 3px;
`;
const raised = css`
  background: linear-gradient(#fff, #f0f0f0);
  border: 1px solid #a9a9a9;
  border-radius: 3px;
`;
const SpinBox = styled.div<{ $w: number; $h: number; $off?: boolean }>`
  ${field}
  width: ${(p) => p.$w}px;
  height: ${(p) => p.$h}px;
  flex: none;
  display: flex;
  align-items: center;
  padding-left: 4px;
  ${(p) => p.$off && css`background: #efefef; color: #8a8a8a; border-color: #b8b8b8;`}
  > span { flex: 1; }
`;
const Steps = styled.div`
  width: 14px;
  height: 100%;
  border-left: 1px solid #b4b4b4;
  background: #fafafa;
  border-radius: 0 3px 3px 0;
  display: flex;
  flex-direction: column;
  align-items: center;
  justify-content: center;
  gap: 3px;
`;
const Spin = ({ w, v, h = 20, off }: { w: number; v: string; h?: number; off?: boolean }) => (
  <SpinBox $w={w} $h={h} $off={off}>
    <span>{v}</span>
    <Steps>
      <Tri $dir="up" $c={off ? '#b4b4b4' : undefined} />
      <Tri $c={off ? '#b4b4b4' : undefined} />
    </Steps>
  </SpinBox>
);
const Combo = styled.div<{ $w: number; $h: number; $off?: boolean }>`
  ${raised}
  width: ${(p) => p.$w}px;
  height: ${(p) => p.$h}px;
  flex: none;
  display: flex;
  align-items: center;
  justify-content: space-between;
  padding: 0 7px 0 3px;
  > span { padding-top: 2px; }
  ${(p) => p.$off && css`color: #8a8a8a; border-color: #bdbdbd;`}
`;
const EditCombo = styled.div<{ $w: number; $h: number }>`
  ${field}
  width: ${(p) => p.$w}px;
  height: ${(p) => p.$h}px;
  flex: none;
  display: flex;
  align-items: center;
  padding-left: 3px;
  > span { flex: 1; padding-top: 1px; }
  > div { width: 19px; height: 100%; border-left: 1px solid #b4b4b4; display: flex; align-items: center; justify-content: center; background: #fafafa; }
`;
const CheckBox = styled.div<{ $off?: boolean }>`
  width: 14px;
  height: 14px;
  flex: none;
  background: ${(p) => (p.$off ? '#efefef' : '#fff')};
  border: 1px solid #b8b8b8;
`;
const Check = ({ on, off }: { on?: boolean; off?: boolean }) => (
  <CheckBox $off={off}>
    {on && <svg width="12" height="12" viewBox="0 0 12 12"><path d="M2.500 6l2.500 3.500 4.500-8" fill="none" stroke="#000" strokeWidth="1.900" /></svg>}
  </CheckBox>
);
const Scroll = styled.div`
  width: 15px;
  flex: none;
  border-left: 1px solid #b4b4b4;
  display: flex;
  flex-direction: column;
  background: #fdfdfd;
`;
const ScrollBtn = styled.div<{ $end?: boolean }>`
  height: 14px;
  flex: none;
  display: flex;
  align-items: center;
  justify-content: center;
  border: 0 solid #b4b4b4;
  border-width: ${(p) => (p.$end ? '1px 0 0' : '0 0 1px')};
`;
const Trough = styled.div<{ $h: number; $thumb?: boolean }>`
  height: ${(p) => p.$h}px;
  flex: none;
  background: ${(p) => (p.$thumb ? 'linear-gradient(90deg,#fff,#f4f4f4)' : '#e6e6e6')};
  border: 0 solid #bdbdbd;
  border-width: ${(p) => (p.$thumb ? '1px 0' : '0')};
`;
const ScrollBar = ({ parts }: { parts: [number, boolean][] }) => (
  <Scroll>
    <ScrollBtn><Tri $dir="up" /></ScrollBtn>
    {parts.map(([h, t], i) => <Trough key={i} $h={h} $thumb={t} />)}
    <ScrollBtn $end><Tri /></ScrollBtn>
  </Scroll>
);

/* ---------- toolbars ---------- */

const Menu = styled.nav`
  height: 22px;
  border-top: 2px solid #fff;
  border-bottom: 1px solid #d0d0d0;
  background: #efefef;
  color: #9a9a9a;
  display: flex;
  align-items: center;
  padding-left: 10px;
`;
const MenuItem = styled.span<{ $w: number }>`
  width: ${(p) => p.$w}px;
  white-space: nowrap;
`;
const Bar = styled.div<{ $h: number; $pt?: number }>`
  height: ${(p) => p.$h}px;
  padding-top: ${(p) => p.$pt ?? 0}px;
  background: linear-gradient(#fafafa, #efefef);
  border-bottom: 1px solid #b4b4b4;
  display: flex;
  align-items: center;
`;
const Dark = styled.div<{ $w: number; $dot?: boolean }>`
  width: ${(p) => p.$w}px;
  height: ${(p) => (p.$dot ? 18 : 19)}px;
  flex: none;
  background: #595959;
  color: #f2f2f2;
  display: flex;
  align-items: center;
  white-space: nowrap;
  overflow: hidden;
  letter-spacing: ${(p) => (p.$dot ? -0.6 : -0.5)}px;
  justify-content: ${(p) => (p.$dot ? 'flex-start' : 'center')};
  font-weight: ${(p) => (p.$dot ? 400 : 700)};
  &::before {
    content: '';
    display: ${(p) => (p.$dot ? 'block' : 'none')};
    width: 12px;
    height: 12px;
    margin: 0 5px 0 1px;
    border-radius: 50%;
    border: 3px solid #444;
    background: #bbb;
    flex: none;
  }
`;

/* Toolbar description: "|" handle, "," separator, "v" arrow, "-name" disabled, "+name" pressed */
const Tools = ({ list, s }: { list: string; s?: number }) => (
  <>
    {list.split(' ').map((t, i) => {
      if (t === '|0') return <Handle key={i} $first />;
      if (t === '|') return <Handle key={i} />;
      if (t === ',') return <Sep key={i} />;
      if (t === 'v') return <Slot key={i} $w={12}><Tri /></Slot>;
      if (t === '-v') return <Slot key={i} $w={12}><Tri $c="#a8a8a8" /></Slot>;
      const name = t.replace(/^[-+]/, '');
      return <Slot key={i} $on={t[0] === '+'}><Icon n={name} off={t[0] === '-'} s={s} /></Slot>;
    })}
  </>
);

const menu: [string, number][] = [
  ['Pro&jekt', 51], ['&Edycja', 48], ['&Widok', 48], ['W&arstwa', 59], ['&Ustawienia', 71], ['&Wtyczki', 55], ['Wekt&or', 52],
  ['&Raster', 46], ['&Baza danych', 80], ['W &internecie', 80], ['Siatka', 45], ['SCP', 35], ['Pro&cessing', 71], ['&Pomoc', 60],
];
const Mnemonic = ({ t }: { t: string }) => {
  const i = t.indexOf('&');
  if (i < 0) return <>{t}</>;
  return <>{t.slice(0, i)}<u>{t[i + 1]}</u>{t.slice(i + 2)}</>;
};

/* ---------- docks ---------- */

const Screen = styled.div`
  width: 1920px;
  height: 1059px;
  position: relative;
  overflow: hidden;
  display: flex;
  flex-direction: column;
  background: #efefef;
`;
const Body = styled.div`
  height: 869px;
  display: grid;
  grid-template-columns: 247px 6px 1216px 6px 445px;
`;
const Dock = styled.section`
  display: flex;
  flex-direction: column;
  min-width: 0;
`;
const DockTitle = styled.header<{ $h?: number }>`
  height: ${(p) => p.$h ?? 22}px;
  flex: none;
  display: flex;
  align-items: center;
  padding: 0 2px 0 4px;
  font-size: 12.3px;
  > span { flex: 1; }
  > svg { margin-left: 3px; }
`;
const Title = ({ t, h }: { t?: string; h?: number }) => (
  <DockTitle $h={h}>
    <span>{t}</span>
    <svg width="11" height="11" viewBox="0 0 11 11" fill="none" stroke="#555"><rect x=".5" y=".5" width="10" height="10" rx="2" /><path d="M4.500 4V2.500h4v4H7M2.500 4.500h4v4h-4z" /></svg>
    <svg width="11" height="11" viewBox="0 0 11 11" fill="none" stroke="#555"><rect x=".5" y=".5" width="10" height="10" rx="2" /><path d="M3 3l5 5M8 3l-5 5" strokeWidth="2" /></svg>
  </DockTitle>
);
const DockTools = styled.div`
  height: 27px;
  margin-bottom: 2px;
  flex: none;
  display: flex;
  align-items: center;
  padding-left: 3px;
`;
const More = styled.span`
  margin-left: 29px;
  height: 22px;
  font-size: 15px;
`;
const Frame = styled.div<{ $h?: number }>`
  ${(p) => (p.$h ? `height: ${p.$h}px; flex: none;` : 'flex: 1; min-height: 0;')}
  border: 1px solid #b4b4b4;
  background: #fff;
  display: flex;
  overflow: hidden;
`;
const Rows = styled.div`
  flex: 1;
  min-width: 0;
  overflow: hidden;
`;
const Splitter = styled.i<{ $h: number; $mt?: number }>`
  height: ${(p) => p.$h}px;
  margin-top: ${(p) => p.$mt ?? 0}px;
  flex: none;
  background: repeating-linear-gradient(90deg, #b4b4b4 0 1px, transparent 1px 3px) center / 16px 1px no-repeat;
`;
const VSplitter = styled.i`
  background: repeating-linear-gradient(#b4b4b4 0 1px, transparent 1px 3px) center / 1px 16px no-repeat;
`;
const VSplitterFill = styled(VSplitter)`
  flex: 1;
`;
const TreeRow = styled.div<{ $pl: number; $hot?: string }>`
  height: 18px;
  display: flex;
  align-items: center;
  padding: 2px 0 0 ${(p) => p.$pl}px;
  white-space: nowrap;
  background: ${(p) => (p.$hot ? `linear-gradient(#efefef, #efefef) left / ${p.$hot} 100% no-repeat` : 'none')};
  > i { margin-top: -2px; }
  > svg { margin: -2px 6px 0 9px; }
`;
const HeaderRow = styled.div`
  width: 100%;
  height: 19px;
  line-height: 20px;
  background: linear-gradient(#fdfdfd, #eeeeee);
  border-bottom: 1px solid #b4b4b4;
  display: flex;
  > span { padding-left: 2px; }
  > span:first-child { width: 141px; border-right: 1px solid #c4c4c4; }
`;
const FormLine = styled.div<{ $mt: number; $gap: number; $off?: boolean }>`
  margin-top: ${(p) => p.$mt}px;
  display: flex;
  align-items: center;
  padding-left: 4px;
  color: ${(p) => (p.$off ? '#8a8a8a' : '#000')};
  > span:first-child { width: ${(p) => p.$gap}px; white-space: nowrap; padding-top: 2px; }
`;

const browser: [string, string][] = [
  ['pipelines', 'line'], ['popp', 'point'], ['railroads', 'line'], ['regions', 'poly'], ['rivers', 'line'],
  ['storagep', 'point'], ['swamp', 'poly'], ['trails', 'line'], ['trees', 'poly'], ['tundra', 'poly'],
];

type Layer = { t: string; on?: boolean; kind: 'fill' | 'line' | 'dot' | 'marker'; c: string; mem?: boolean; hot?: boolean };
const layers: Layer[] = [
  { t: 'Deciduous', kind: 'fill', c: '#f4a6b1' },
  { t: 'Mixed Trees', kind: 'fill', c: '#e9718f' },
  { t: 'railroads', kind: 'line', c: '#b39bc8' },
  { t: 'swamp', on: true, kind: 'fill', c: '#85b66f', hot: true },
  { t: 'lokalizacja_hoteli(roznica)', on: true, kind: 'fill', c: '#91522d', mem: true },
  { t: 'Bufo_liniekolejowe_9', kind: 'fill', c: '#c43c39', mem: true },
  { t: 'Bufor_lotniska_9', kind: 'fill', c: '#e15989', mem: true },
  { t: 'Wierzchołki [662]', on: true, kind: 'dot', c: '#987db7', mem: true },
  { t: 'Przecięcia [8]', on: true, kind: 'dot', c: '#b7484b', mem: true },
  { t: 'majrivers', on: true, kind: 'line', c: '#a47fb5' },
  { t: 'pop_bristol [11]', kind: 'dot', c: '#91522d' },
  { t: 'Bufor', kind: 'fill', c: '#729b6f', mem: true },
  { t: 'rivers', on: true, kind: 'line', c: '#a0c78f' },
  { t: 'popp', kind: 'dot', c: '#e5b636' },
  { t: 'airports', kind: 'marker', c: '' },
  { t: 'Długość linii', kind: 'fill', c: '#b7484b' },
  { t: 'MS', kind: 'fill', c: '#91522d' },
  { t: 'regions', on: true, kind: 'fill', c: '#e5b636' },
];
const LayerRow = styled.div<{ $on?: boolean; $hot?: boolean; $tight?: boolean }>`
  height: 18px;
  display: flex;
  align-items: center;
  padding: 0 4px 0 23px;
  font-weight: ${(p) => (p.$on ? 700 : 600)};
  font-style: ${(p) => (p.$on ? 'normal' : 'italic')};
  color: ${(p) => (p.$on ? '#000' : '#868686')};
  background: ${(p) => (p.$hot ? '#efefef' : 'transparent')};
  white-space: nowrap;
  > span {
    flex: 1;
    padding-top: 2px;
    text-decoration: ${(p) => (p.$hot ? 'underline' : 'none')};
    letter-spacing: ${(p) => (p.$on ? (p.$tight ? '-0.5px' : '-0.3px') : '0.15px')};
  }
`;
const Symbol = styled.div<{ $kind: Layer['kind']; $c: string }>`
  width: ${(p) => (p.$kind === 'line' ? 14 : 16)}px;
  height: 16px;
  margin: 0 6px;
  flex: none;
  display: flex;
  align-items: center;
  justify-content: center;
  ${(p) => p.$kind === 'fill' && css`background: ${p.$c}; border: 1px solid #00000066;`}
  ${(p) => p.$kind === 'line' && css`&::before { content: ''; width: 14px; height: 2px; background: ${p.$c}; }`}
  ${(p) => p.$kind === 'dot' && css`&::before { content: ''; width: 7px; height: 7px; border-radius: 50%; border: 1px solid #444; background: ${p.$c}; }`}
`;
const MemBtn = styled.div`
  width: 17px;
  height: 16px;
  flex: none;
  border: 1px solid #dcdcdc;
  background: #fafafa;
  display: flex;
  align-items: center;
  justify-content: center;
`;
const Tabs = styled.div`
  height: 25px;
  flex: none;
  display: flex;
  align-items: flex-start;
`;
const Tab = styled.div<{ $w: number; $h: number; $on?: boolean }>`
  width: ${(p) => p.$w}px;
  height: ${(p) => p.$h}px;
  padding-top: 2px;
  border: 1px solid #b4b4b4;
  border-radius: 2px;
  background: ${(p) => (p.$on ? '#f8f8f8' : '#dedede')};
  display: flex;
  align-items: center;
  justify-content: center;
  white-space: nowrap;
`;

/* ---------- map ---------- */

const MapArea = styled.main`
  border: 1px solid #b4b4b4;
  border-top: 0;
  background: #fff;
  display: flex;
  flex-direction: column;
  overflow: hidden;
`;
const Message = styled.div`
  height: 30px;
  margin: 1px -1px 0;
  flex: none;
  background: #dff0d8;
  border: 1px solid #7f9f7f;
  display: flex;
  align-items: center;
  padding: 0 22px 0 9px;
  > svg:first-child { margin-right: 9px; }
  > b { letter-spacing: -0.37px; padding-top: 2px; }
  > span { flex: 1; padding: 2px 0 0 2px; letter-spacing: -0.85px; white-space: nowrap; }
  u { color: #2c8a1e; letter-spacing: -0.8px; margin-left: 1px; }
`;
const MapDrawing = () => (
  <svg width="1214" height="837" viewBox="254 145 1214 837">
    <g transform="translate(250 740) scale(.3827 .3333)" fill="#e5b636" stroke="#444" strokeWidth="2.600" strokeLinejoin="round">
      <path d="M67 613l6-7 10-2 7 8-6 6-12 2zM150 616l6-4 3 4-4 5zM162 610l3-1M180 611l8-6 11 0 2 5-9 7-12 3z" />
      <path d="M553 528l5-6 4 3-6 6zM564 519l6-3" />
      <path d="M565 482l5-8h12l10-28 8-5 12 6 20 8-2 24-28 1-8 14-16 6-12-5z" />
      <path d="M760 352l20 0 15-3 8 3-6 6 6 4 9-7-3-6 9 5-6 8 12 16 8-5 6 10 12-8-6-10-8-4 4-20 14-24 18-10 18 4 90 20 0 26-12 8-4 6-6-8-8 4-12 6-4 14-4-10-10 2-12 4-9 2-3 16-5-10 2-14-16 0-8 10-14 6-8 14-10 0-10-6-4 14-12-6-16 12-16 4z" />
      <path d="M870 306l4 14-4 50" fill="none" />
      <path d="M806 440l-2-14 10-8 6 6 8-10 4 6-2 8 8 4-8 8-8-4-4 10zM838 416l6 4 6-6M838 480l6-14 4-10 8 4-2-14 8 8 4 8-8 2-4 10-8 2zM874 462l8-6-6-12 8 14 0 8zM886 470l6 10-4 8zM862 490l6 0M874 496l4-4M852 410l4 6M850 432l6-6" />
      <path d="M1030 232h38l-8 12 4 8-10-4-4 10-8-4-10 8zM1020 300l10 6-4-12M1034 268l8 4" />
      <path d="M1166 232h42l10 16-2 20-8-2-8 24-6-6 6-14-6-10 8-6-8-6-8 12-6-8 4-8-12 8zM1176 246l6-4 4 4z" />
      <path d="M1150 322l8-14 10-6-4 10-10 14zM1172 306l14-6 4 6 14 2-8 6-8-4-14 0zM1040 342l4 6M1044 354l4 6-4 6zM1098 388l8-8 4 10-4 8z" />
    </g>
    <g fill="#91522d" stroke="#333">
      <circle cx="240" cy="936" r="34.500" /><circle cx="381.600" cy="803" r="34" /><circle cx="738" cy="797" r="34" />
      <circle cx="611.600" cy="823.500" r="34" /><circle cx="518" cy="881.500" r="34" />
      <circle cx="426.500" cy="917" r="34" /><circle cx="367.500" cy="942" r="34" />
      <circle cx="426.500" cy="917" r="33.500" stroke="none" />
    </g>
  </svg>
);

/* ---------- windows ---------- */

const Window = styled.div<{ $x: number; $y: number; $w: number; $h: number }>`
  position: absolute;
  left: ${(p) => p.$x}px;
  top: ${(p) => p.$y}px;
  width: ${(p) => p.$w}px;
  height: ${(p) => p.$h}px;
  background: #efefef;
  border: 1px solid #a8a8a8;
  border-radius: 9px;
  box-shadow: 0 14px 34px rgba(0, 0, 0, 0.32), 0 0 6px rgba(0, 0, 0, 0.1);
  display: flex;
  flex-direction: column;
  overflow: hidden;
`;
const WinTitle = styled.div<{ $pr: number; $ls: number }>`
  height: 30px;
  flex: none;
  background: #fff;
  color: #999;
  display: flex;
  align-items: center;
  padding: 0 ${(p) => p.$pr}px 0 8px;
  letter-spacing: ${(p) => p.$ls}px;
  > span { flex: 1; padding-left: 7px; }
  > svg + svg { margin-left: 35px; }
`;
const Glyph = ({ k }: { k: 'min' | 'max' | 'close' | 'restore' }) => (
  <svg width="11" height="11" viewBox="0 0 11 11" fill="none" stroke="#888">
    {k === 'min' && <path d="M0 5.500h11" />}
    {k === 'max' && <rect x=".5" y=".5" width="10" height="10" />}
    {k === 'close' && <path d="M.5.5l10 10M10.500.5l-10 10" />}
    {k === 'restore' && <path d="M1 3.500h7v7H1zM3 3.500V1h7v7H8" />}
  </svg>
);
const AttrTools = styled.div`
  height: 32px;
  flex: none;
  display: flex;
  align-items: center;
  padding: 0 0 2px 3px;
`;
const Grid = styled.div`
  height: 577px;
  flex: none;
  border-top: 1px solid #b0b0b0;
  border-bottom: 1px solid #b0b0b0;
  border-left: 1px solid #b0b0b0;
  display: flex;
  background: #fff;
  overflow: hidden;
`;
const GridBody = styled.div`
  flex: 1;
  overflow: hidden;
`;
const GridRow = styled.div<{ $alt?: boolean; $head?: boolean }>`
  width: 518px;
  height: ${(p) => (p.$head ? 19 : 30)}px;
  display: grid;
  grid-template-columns: 18px repeat(5, 100px);
  background: ${(p) => (p.$head ? 'linear-gradient(#fbfbfb,#eee)' : p.$alt ? '#e8e7e3' : '#fff')};
  line-height: ${(p) => (p.$head ? 19 : 30)}px;
  > span { border: 0 solid ${(p) => (p.$head ? '#c4c4c4' : '#bdbdbd')}; border-width: 0 1px 1px 0; padding: 0 3px; overflow: hidden; }
  > span:first-child { background: linear-gradient(#fcfcfc, #eee); padding: 0 1px; border-color: #aaa; }
  ${(p) => p.$head && css`text-align: center; > span { border-bottom-color: #aaa; }`}
`;
const Num = styled.span`text-align: right;`;
const HeadFill = styled.div`
  background: linear-gradient(90deg, #fff 0 518px, #efefef 518px);
`;
const ShowAll = styled.div`
  ${raised}
  width: 149px;
  height: 23px;
  margin: 4px 0 0 3px;
  display: flex;
  align-items: center;
  padding: 0 2px 0 3px;
  gap: 3px;
  white-space: nowrap;
  letter-spacing: -0.82px;
  > span { flex: 1; }
  > i { align-self: flex-end; margin-bottom: 3px; }
`;

const areas = ['1263,08', '489,739', '106,636', '230,417', '151,251', '350,414', '164,443', '207,046', '108,921', '198,646', '348,054', '104,24', '319,453', '198,381', '135,838', '230,801', '246,26', '357,742', '252,476'];

/* field calculator */
const CalcBody = styled.div`
  flex: 1;
  display: flex;
  flex-direction: column;
  padding: 12px 10px 0 10px;
`;
const Line = styled.div<{ $h: number; $gap?: number; $off?: boolean; $b?: boolean }>`
  height: ${(p) => p.$h}px;
  flex: none;
  display: flex;
  align-items: center;
  gap: ${(p) => p.$gap ?? 5}px;
  color: ${(p) => (p.$off ? '#8a8a8a' : '#000')};
  font-size: ${(p) => (p.$b ? 12 : 11.5)}px;
  letter-spacing: ${(p) => (p.$b ? -0.4 : -0.55)}px;
  font-weight: ${(p) => (p.$b ? 700 : 400)};
  white-space: nowrap;
`;
const LineText = styled.span<{ $dy?: number }>`
  padding-top: ${(p) => (p.$dy ?? 1) * 2}px;
`;
const Columns = styled.div<{ $gap: number; $pl?: number }>`
  display: flex;
  gap: ${(p) => p.$gap}px;
  padding-left: ${(p) => p.$pl ?? 0}px;
`;
const Column = styled.div<{ $w: number }>`
  width: ${(p) => p.$w}px;
  flex: none;
  display: flex;
  flex-direction: column;
`;
const Group = styled.div`
  height: 110px;
  margin-top: 3px;
  border: 1px solid #d6d6d6;
  border-radius: 2px;
  background: #ececec;
  padding: 12px 4px 0;
`;
const Label = styled.span<{ $w: number }>`
  width: ${(p) => p.$w}px;
  flex: none;
  padding-top: 2px;
  letter-spacing: -0.57px;
`;
const Input = styled.div<{ $w: number; $h: number }>`
  ${field}
  width: ${(p) => p.$w}px;
  height: ${(p) => p.$h}px;
  flex: none;
  display: flex;
  align-items: center;
  padding: 0 8px;
  gap: 7px;
  color: #888;
`;
const SearchText = styled.span`
  flex: 1;
  padding-top: 2px;
  color: #000;
`;
const Type123 = styled.b`
  font-size: 10px;
  color: #555;
  margin: 0 3px 0 1px;
  letter-spacing: 0;
`;
const CalcTabs = styled.div`
  height: 25px;
  margin-top: 5px;
  flex: none;
  display: flex;
  align-items: flex-end;
  box-shadow: inset 0 -1px #b4b4b4;
`;
const CalcTab = styled.div<{ $w: number; $on?: boolean }>`
  width: ${(p) => p.$w}px;
  height: ${(p) => (p.$on ? 25 : 22)}px;
  padding-top: 1px;
  border: 1px solid #b4b4b4;
  border-bottom-color: ${(p) => (p.$on ? '#fff' : '#b4b4b4')};
  border-radius: 3px 3px 0 0;
  background: ${(p) => (p.$on ? '#fff' : '#e6e6e6')};
  display: flex;
  align-items: center;
  justify-content: center;
  letter-spacing: -0.55px;
`;
const Btn = styled.div<{ $w: number; $h: number; $off?: boolean }>`
  ${raised}
  width: ${(p) => p.$w}px;
  height: ${(p) => p.$h}px;
  flex: none;
  display: flex;
  align-items: center;
  justify-content: center;
  color: ${(p) => (p.$off ? '#888' : '#000')};
  ${(p) => p.$off && css`border-color: #c4c4c4;`}
`;
const Editor = styled.div`
  height: 234px;
  margin: 6px 0 6px;
  border: 1px solid #b4b4b4;
  background: #fff;
  padding: 0 1px;
  font: 13.33px/18px "Liberation Mono", monospace;
  letter-spacing: 0;
  color: #4271ae;
  > mark { background: #b7f907; color: #5a5a1a; display: inline-block; height: 18px; }
`;
const FnRow = styled.div<{ $top?: boolean }>`
  height: 15px;
  line-height: 15px;
  display: flex;
  align-items: center;
  padding: 2px 0 0 8px;
  background: ${(p) => (p.$top ? '#fff' : 'linear-gradient(90deg,#fff 20px,#c0c0c0 20px)')};
  font-weight: ${(p) => (p.$top ? 700 : 400)};
  white-space: nowrap;
  > i { margin: -2px 11px 0 0; visibility: ${(p) => (p.$top ? 'hidden' : 'visible')}; }
`;
const functions = ['row_number', 'Data i czas', 'Funkcje agregujące', 'Geometria', 'Kolor', 'Konwersja', 'Luźne dopasowywanie', 'Mapy wartości', 'Matematyczne', 'Ogólne', 'Operatory', 'Ostatnio użyte (fieldcalc)', 'Pliki i ścieżki', 'Pola i wartości', 'Rastry', 'Tablice', 'tekst', 'Warstwy mapy', 'Wiersz i atrubuty', 'Wyrażenia warunkowe', 'Zmienne'];
const Notice = styled.div`
  display: flex;
  margin-top: 36px;
  padding-left: 9px;
  gap: 36px;
  line-height: 13px;
  height: 65px;
  > p { margin: 4px 0 0; width: 660px; font-size: 11.5px; letter-spacing: -0.53px; }
`;
const Buttons = styled.div`
  display: flex;
  justify-content: flex-end;
  gap: 7px;
  padding-right: 1px;
`;

/* ---------- bottom ---------- */

const Status = styled.footer`
  height: 29px;
  flex: none;
  display: flex;
  align-items: center;
  padding: 0 7px 2px 4px;
  > span { white-space: nowrap; padding-top: 2px; }
`;
const StatusNote = styled.span`
  margin-left: 12px;
  flex: 1;
  letter-spacing: -0.6px;
`;
const TaskBar = styled.div`
  height: 47px;
  flex: none;
  background: #d9d9d9;
  border-top: 1px solid #cdcdcd;
  display: flex;
  align-items: center;
  padding: 0 20px 0 699px;
`;
const TaskSlot = styled.div<{ $on?: boolean; $dot?: boolean }>`
  width: 38px;
  height: 39px;
  margin-right: 6.1px;
  flex: none;
  border-radius: 4px;
  background: ${(p) => (p.$on ? '#efefef' : 'none')};
  display: flex;
  flex-direction: column;
  align-items: center;
  padding-top: 6px;
  &::after {
    content: '';
    width: ${(p) => (p.$on ? 16 : 6)}px;
    height: 3px;
    border-radius: 2px;
    margin-top: 3px;
    background: ${(p) => (p.$on ? '#1279d4' : p.$dot ? '#7d7d7d' : 'transparent')};
  }
`;
const Tray = styled.div`
  margin-left: auto;
  display: flex;
  align-items: center;
  color: #222;
`;
const Clock = styled.div`
  width: 62px;
  text-align: right;
  line-height: 16px;
  margin: 0 10px 0 14px;
  letter-spacing: -0.3px;
  white-space: nowrap;
`;
const MiniTitle = styled.div`
  flex: 1;
  display: flex;
  align-items: center;
  background: #fff;
  padding-left: 8px;
  > svg:nth-child(2) { margin-left: 1px; }
  > svg:nth-child(3) { margin-left: 34px; }
  > svg:nth-child(4) { margin-left: 34px; }
`;

const tasks: ReactNode[] = [
  <g fill="#1c93e8"><rect x="1" y="1" width="11" height="11" fill="#2fb4f4" /><rect x="13" y="1" width="11" height="11" fill="#22a4ee" /><rect x="1" y="13" width="11" height="11" fill="#158be0" /><rect x="13" y="13" width="11" height="11" fill="#0a78d4" /></g>,
  <g><path d="M1 3q0-1 1-1h7l3 3v4H1z" fill="#d99a12" /><path d="M1 6h23v17H1z" fill="#fbcb45" /><path d="M5 23v-5q0-2 2-2h11q2 0 2 2v5z" fill="#1072be" /></g>,
  <g><circle cx="13" cy="5" r="4" fill="#7b83eb" /><circle cx="21" cy="9" r="3" fill="#5059c9" /><path d="M8 10h12v8q0 6-6 6t-6-6z" fill="#7b83eb" /><path d="M19 11h6v6q0 4-5 4z" fill="#5059c9" /><rect x="0" y="6" width="13" height="13" rx="1" fill="#4650b5" /><text x="3" y="17" fontSize="11" fontWeight="700" fill="#fff" fontFamily="Noto Sans, sans-serif">T</text><circle cx="23" cy="3" r="5" fill="#7dbb0f" stroke="#e8f5d0" /><path d="M20.500 3l2 2 3-4" stroke="#fff" fill="none" strokeWidth="1.300" /></g>,
  <g><circle cx="12" cy="13" r="11.500" fill="#2fa04e" /><path d="M2 7a11.500 11.500 0 0 1 20 0H12L7 15z" fill="#e23c2f" /><path d="M22 7a11.500 11.500 0 0 1-10 17.500L17 14z" fill="#fbc116" /><circle cx="12" cy="13" r="5.500" fill="#3b7de8" stroke="#fff" strokeWidth="1.500" /><circle cx="21" cy="3" r="8" fill="#7e57c2" /><text x="18" y="7" fontSize="10" fill="#fff" fontFamily="Noto Sans, sans-serif">T</text></g>,
  <g><rect x="4" y="2" width="17" height="20" fill="#4cc3dc" /><path d="M6 0v4M9 0v4M12 0v4M15 0v4M18 0v4" stroke="#234" strokeWidth="1.300" /><path d="M7 8h11M7 12h11M7 16h11" stroke="#17627a" strokeWidth="1.800" /><rect x="4" y="22" width="17" height="3" fill="#b3601a" /></g>,
  <g><circle cx="12.500" cy="12.500" r="12" fill="#1b78c8" /><path d="M1 10C4-3 23-3 24.500 11c0 5-6 7-10 5 4-6-8-13-13.500-6z" fill="#41c98c" /><path d="M1 10C4-1 16-2 20 4 12 2 5 5 1 12z" fill="#31b5e4" /><path d="M9 13c-2 6 5 11 12 8-6 8-17 3-16-5 0-3 2-6 6-6z" fill="#0d4f9c" /><path d="M15 16c2-2 1-6-2-7 4 0 8 2 11 5-2 4-6 4-9 2z" fill="#d9d9d9" /></g>,
  <g><rect x="1" y="5" width="24" height="18" rx="2" fill="#6b7680" /><path d="M8 5l2-3h6l2 3z" fill="#59636c" /><rect x="1" y="3" width="5" height="3" fill="#2fa4dc" /><circle cx="13" cy="14" r="7" fill="#e8ecef" /><circle cx="13" cy="14" r="5" fill="#a58be8" /><circle cx="13" cy="14" r="2.500" fill="#6aa4f0" /></g>,
  <g><rect x="2" y="1" width="21" height="22" rx="4" fill="#b30b00" /><path d="M6 17c3-1 7-7 6.500-11-.5-2-2-1-1 1 1.500 4 4 7 8 7 1-2-8-2-13.500 3z" fill="none" stroke="#fff" strokeWidth="1.500" /></g>,
  <g><path d="M2 8q0-7 7-6 4-2 8 0 7-1 7 5 0 6-4 9l-2 1v6q-3 3-5-1v-8l-3 3-3-1q-5-3-5-8z" fill="#336791" stroke="#d5dde5" /><path d="M9 3q-3 5 0 12M16 3q4 6 1 11" stroke="#d5dde5" fill="none" /><circle cx="10" cy="7" r="1" fill="#fff" /></g>,
  <g><circle cx="12.500" cy="12.500" r="11.500" fill="#5f7fa8" stroke="#3c4c5e" strokeWidth="1.500" /><path d="M3 9q3-6 8-6l2 5-5 3-1 5-4-3zM17 5l5 4-2 5-5-4zM11 17l6-1-2 7-4-1z" fill="#8fbf8f" /><path d="M9 5q7-2 10 5" stroke="#fff" strokeWidth="3" opacity=".7" fill="none" /></g>,
  <g transform="scale(1.250)">{icons.q}</g>,
  <g><path d="M3 3h11M3 3v10" stroke="#d8410f" strokeWidth="3.500" strokeDasharray="3 1" /><path d="M15 9v8M9 16h7" stroke="#778" strokeWidth="3" /><path d="M14 18l5-5" stroke="#999" strokeWidth="2" /><circle cx="22" cy="14" r="2.500" fill="none" stroke="#1e9be0" strokeWidth="2" /><circle cx="14" cy="22" r="2.500" fill="none" stroke="#1e9be0" strokeWidth="2" /></g>,
];

const MiniWindow = ({ x }: { x: number }) => (
  <Window $x={x} $y={984} $w={145} $h={27}>
    <MiniTitle>
      <Icon n="q" s={16} /><Glyph k="restore" /><Glyph k="max" /><Glyph k="close" />
    </MiniTitle>
  </Window>
);

export default function App() {
  return (
    <Screen>
      <Global />
      <Menu>{menu.map(([t, w]) => <MenuItem key={t} $w={w}><Mnemonic t={t} /></MenuItem>)}</Menu>
      <Bar $h={31}>
        <Tools list="|0 new open save layout layouts style | hand pan zin zout zfull zsel zlayer -znat zlast -znext newmap new3d bmadd bm clock refresh | +identify abacus +gear sigma table v measure v bubble -pin -v" />
      </Bar>
      <Bar $h={31}>
        <Tools list="|0 data gpkg vline feather chip mesh vvirt | pencils pencil -save -blob -vertex -v -listedit -trash -cut -copy -paste -undo -redo | abc pie , abcb abcr , -abc1 -abc2 -abc3 -abc4 -abc5 | globeb | python | help |" />
      </Bar>
      <Bar $h={30} $pt={1}>
        <Tools list="|0 select v form v desel v selpin | scpa scpb" />
        <Dark $w={59} $dot>RGB =</Dark>
        <Slot $w={2} />
        <EditCombo $w={79} $h={20}><span>-</span><div><Tri /></div></EditCombo>
        <Slot $w={1} />
        <Tools list="scpc scpd scpe" />
        <Slot $w={1} />
        <Dark $w={42} $dot>OT</Dark>
        <Slot $w={1} />
        <Tools list="roi plus redoG" />
        <Slot $w={1} />
        <Dark $w={24}>Odl.</Dark>
        <Slot $w={1} />
        <Spin w={100} v="0,010000" />
        <Slot $w={1} />
        <Dark $w={23}>Min</Dark>
        <Slot $w={1} />
        <Spin w={60} v="60" />
        <Slot $w={1} />
        <Dark $w={27}>Max</Dark>
        <Slot $w={1} />
        <Spin w={60} v="100" />
        <Tools list="lens2" />
        <Slot $w={1} />
        <Dark $w={64} $dot>Podgląd</Dark>
        <Tools list="mosaic redoG" />
        <Dark $w={10}>T</Dark>
        <Slot $w={1} />
        <Spin w={49} v="0" />
        <Slot $w={1} />
        <Dark $w={10}>S</Dark>
        <Slot $w={1} />
        <Spin w={60} v="200" />
        <Tools list="bin kml | raster" />
        <Spin w={60} v="0" />
        <Slot $w={26}><Icon n="term" s={17} /></Slot>
        <Spin w={60} v="1" />
        <Slot $w={26}><Icon n="term" s={17} /></Slot>
        <Spin w={60} v="2" />
        <Slot $w={26}><Icon n="term" s={17} /></Slot>
        <Tools list="flag | -meshe -meshs -v -meshc -meshw -v | annA v annS annP annL annM annT , annB v" />
      </Bar>

      <Body>
        <Dock>
          <Title t="Przeglądarka" />
          <DockTools><Tools list="addsel refresh filter collapse info" s={16} /></DockTools>
          <Frame $h={200}>
            <Rows>
              {browser.map(([t, k]) => (
                <TreeRow key={t} $pl={54} $hot={t === 'swamp' ? '179px' : undefined}>
                  <Tri $dir="right" /><Icon n={k} s={16} />{t}
                </TreeRow>
              ))}
              <TreeRow $pl={10}><Icon n="hana" s={16} />SAP HANA</TreeRow>
            </Rows>
            <ScrollBar parts={[[75, false], [53, true], [42, false]]} />
          </Frame>
          <Splitter $h={5} />
          <Title t="Wynik identyfikacji" />
          <DockTools>
            <Tools list="-formv , expand collapse expandnew , desel , -copy -print ," s={16} />
            <More>»</More>
          </DockTools>
          <Frame $h={95}>
            <HeaderRow><span>Obiekt</span><span>Wartość</span></HeaderRow>
          </Frame>
          <FormLine $mt={5} $gap={29}><span>Tryb</span><Combo $w={209} $h={24}><span>bieżąca warstwa</span><Tri /></Combo></FormLine>
          <FormLine $mt={8} $gap={36} $off><span>Widok</span><Combo $w={72} $h={22} $off><span>Drzewo</span><Tri $c="#a8a8a8" /></Combo></FormLine>
          <Splitter $h={6} $mt={7} />
          <Title t="Warstwy" />
          <DockTools><Tools list="brush addgrp eye filterd eps v expand collapse rmgrp" s={16} /></DockTools>
          <Frame $h={319}>
            <Rows>
              {layers.map((l) => (
                <LayerRow key={l.t + l.c} $on={l.on} $hot={l.hot} $tight={l.t.length > 20}>
                  <Check on={l.on} />
                  <Symbol $kind={l.kind} $c={l.c}>{l.kind === 'marker' && <Icon n="marker" s={14} />}</Symbol>
                  <span>{l.t}</span>
                  {l.mem && <MemBtn><Icon n="memchip" s={13} /></MemBtn>}
                </LayerRow>
              ))}
            </Rows>
            <ScrollBar parts={[[254, true], [35, false]]} />
          </Frame>
          <Tabs><Tab $w={68} $h={23} $on>Warstwy</Tab><Tab $w={94} $h={21}>Edytor węzłów</Tab></Tabs>
        </Dock>
        <VSplitter />
        <MapArea>
          <Message>
            <svg width="25" height="18" viewBox="0 0 25 18"><path d="M1 4l8 5L24 1 9 17z" fill="#2fd02f" stroke="#167a16" /></svg>
            <b>Warstwa wyeksportowana:</b>
            <span>Zapisano warstwę wektorową do <u>pop_bristol.shp</u></span>
            <svg width="18" height="18" viewBox="0 0 18 18"><circle cx="9" cy="9" r="8.500" fill="#2f3338" /><path d="M5.500 5.500l7 7M12.500 5.500l-7 7" stroke="#fff" strokeWidth="2.500" /></svg>
          </Message>
          <MapDrawing />
        </MapArea>
        <i />
        <Dock>
          <Title t="Algorytmy Processingu" />
          <DockTools><Tools list="gears pythond clock +doc , note , wrench" s={17} /></DockTools>
          <Input $w={444} $h={22}>
            <Icon n="search" s={13} /><SearchText>otoczka</SearchText>
            <svg width="14" height="10" viewBox="0 0 14 10"><path d="M4 0h10v10H4L0 5z" fill="#888" /><path d="M5.500 2.500l5 5M10.500 2.500l-5 5" stroke="#fff" /></svg>
          </Input>
          <Frame $h={142}>
            <Rows>
              <TreeRow $pl={6} $hot="100%"><Tri /><Icon n="clock" s={16} />Ostatnio używane</TreeRow>
              <TreeRow $pl={35}><Icon n="buf" s={14} />Otoczka</TreeRow>
              <TreeRow $pl={6}><Tri /><Icon n="q" s={16} />Wektor - geometria</TreeRow>
              <TreeRow $pl={35}><Icon n="buf" s={14} />Otoczka</TreeRow>
              <TreeRow $pl={35}><Icon n="hull" s={14} />Otoczka wklesła (k najbliższych sąsiadów)</TreeRow>
              <TreeRow $pl={35}><Icon n="hull" s={14} />Otoczka wklęsła (kształty alfa)</TreeRow>
              <TreeRow $pl={35}><Icon n="hull" s={14} />Otoczka wypukła</TreeRow>
            </Rows>
          </Frame>
          <Splitter $h={5} />
          <Title h={20} />
          <Frame $h={314} />
          <Splitter $h={4} />
          <Frame />
        </Dock>
      </Body>

      <Status>
        <Input $w={299} $h={21} />
        <StatusNote>edycji aktywnej warstwy</StatusNote>
        <Input $w={106} $h={21} />
        <Slot $w={61} />
        <EditCombo $w={81} $h={21}><span /><div><Tri /></div></EditCombo>
        <Slot $w={99} />
        <Spin w={83} h={21} v="100%" />
        <Slot $w={6} />
        <span>Kąt obrotu</span>
        <Slot $w={10} />
        <Spin w={84} v="0,0 °" />
        <Slot $w={6} />
        <Check on />
        <Slot $w={4} />
        <span>Renderuj</span>
        <Slot $w={13} />
        <Icon n="globe" s={15} />
        <Slot $w={1} />
        <span>EPSG:2964</span>
        <Slot $w={22} />
        <Icon n="chat" s={16} />
      </Status>
      <TaskBar>
        {tasks.map((t, i) => (
          <TaskSlot key={i} $on={i === 11} $dot={i > 0}>
            <svg width="25" height="25" viewBox="0 0 25 25" overflow="visible">{t}</svg>
          </TaskSlot>
        ))}
        <Tray>
          <svg width="14" height="8" viewBox="0 0 14 8" fill="none" stroke="#222" strokeWidth="1.500"><path d="M1 7l6-6 6 6" /></svg>
          <Slot $w={13} />
          <svg width="16" height="13" viewBox="0 0 16 13" fill="none" stroke="#222" strokeWidth="1.300"><path d="M1 5q7-7 14 0M3 7.500q5-5 10 0M5.500 9.800q2.500-2.500 5 0" /><circle cx="8" cy="11.500" r="1" fill="#222" /></svg>
          <Slot $w={8} />
          <svg width="16" height="12" viewBox="0 0 16 12" fill="none" stroke="#222"><path d="M1 4h2l4-3.500v11L3 8H1zM10 4l5 5M15 4l-5 5" /></svg>
          <Slot $w={8} />
          <svg width="17" height="10" viewBox="0 0 17 10" fill="none" stroke="#222" strokeWidth="1.300"><rect x="1" y="1" width="13" height="8" rx="1.500" /><path d="M16 3.500v3" strokeWidth="1.800" /><rect x="2.500" y="2.500" width="3.500" height="5" fill="#222" stroke="none" /></svg>
          <Clock>19:45<br />06.11.2022</Clock>
          <svg width="14" height="15" viewBox="0 0 14 15" fill="none" stroke="#222" strokeWidth="1.200"><path d="M7 1q3 7-6 10 4 4 8 2 7-6-2-12z" /></svg>
        </Tray>
      </TaskBar>

      <MiniWindow x={7} />
      <MiniWindow x={168} />

      <Window $x={310} $y={149} $w={1056} $h={669}>
        <WinTitle $pr={17} $ls={-0.42}>
          <Icon n="q" s={16} />
          <span>swamp — Features Total: 69, Filtered: 69, Selected: 0</span>
          <Glyph k="min" /><Glyph k="max" /><Glyph k="close" />
        </WinTitle>
        <AttrTools>
          <Tools list="pencil -listedit -save refresh , -addrow -trash -cut -copy -paste , epsY rows invert desel2 filter moveup pan zsel , -colnew -colnew editcol abacus , cond , action dock" s={16} />
        </AttrTools>
        <Grid>
          <GridBody>
            <HeadFill>
              <GridRow $head><span /><span>gid</span><span>cat</span><span>f_codedesc</span><span>f_code</span><span>areakm2</span></GridRow>
            </HeadFill>
            {areas.map((a, i) => (
              <GridRow key={a} $alt={i % 2 === 1}>
                <span>{i + 1}</span><Num>{i + 1}</Num><Num>{i + 1}</Num><span>Marsh/Swamp</span><span>BH095</span><Num>{a}</Num>
              </GridRow>
            ))}
          </GridBody>
          <ScrollBar parts={[[300, true], [240, false]]} />
        </Grid>
        <ShowAll><Icon n="table" s={14} /><span>pokaż wszystkie obiekty</span><Tri $s={3} /></ShowAll>
      </Window>

      <Window $x={833} $y={292} $w={767} $h={711}>
        <WinTitle $pr={10} $ls={-0.5}>
          <Icon n="q" s={16} />
          <span>swamp — Kalkulator pól</span>
          <Glyph k="close" />
        </WinTitle>
        <CalcBody>
          <Line $h={18} $off $gap={4}><Check off /><LineText>Only update 0 selected feature(s)</LineText></Line>
          <Spacer $h={5} />
          <Columns $gap={7} $pl={1}>
            <Column $w={562}>
              <Line $h={16} $b $gap={5}><Check on /><LineText $dy={2}>Twórz nowe pole</LineText></Line>
              <Group>
                <Line $h={16} $gap={4}><Check /><LineText>Twórz pole wirtualne</LineText></Line>
                <Spacer $h={4} />
                <Line $h={22} $gap={0}><Label $w={131}>Nazwa</Label><Input $w={420} $h={22} /></Line>
                <Spacer $h={3} />
                <Line $h={24} $gap={0}><Label $w={131}>Typ</Label><Combo $w={420} $h={24}><span><Type123>123</Type123>Whole Number (smallint - 16bit)</span><Tri /></Combo></Line>
                <Spacer $h={4} />
                <Line $h={19} $gap={0}>
                  <Label $w={131}>Długość pola wyjściowego</Label><Spin w={135} h={19} v="-1" off />
                  <Slot $w={6} /><Label $w={143}>Dokładność</Label><Spin w={136} h={19} v="3" off />
                </Line>
              </Group>
            </Column>
            <Column $w={174}>
              <Line $h={16} $b $gap={5}><Check /><LineText $dy={2}>Aktualizuj istniejące pole</LineText></Line>
              <Group><Spacer $h={33} /><Combo $w={164} $h={24} $off><span /><Tri $c="#a8a8a8" /></Combo></Group>
            </Column>
          </Columns>
          <CalcTabs><CalcTab $w={75} $on>Wyrażenie</CalcTab><CalcTab $w={90}>Edytor funkcji</CalcTab></CalcTabs>
          <Spacer $h={9} />
          <Columns $gap={0} $pl={9}>
            <Column $w={257}>
              <Line $h={24} $gap={2}>
                {['new', 'save', '-editnote', '-trash', 'imp', 'exp'].map((n) => (
                  <Btn key={n} $w={24} $h={24} $off={n[0] === '-'}><Icon n={n.replace('-', '')} s={17} off={n[0] === '-'} /></Btn>
                ))}
              </Line>
              <Editor>sum<mark>(</mark>areakm2<mark>)</mark></Editor>
              <Line $h={22} $gap={2}>
                {['=', '+', '-', '/', '*', '^', '||', '(', ')', "'\\n'"].map((o) => <Btn key={o} $w={23.9} $h={22}>{o}</Btn>)}
              </Line>
              <Spacer $h={8} />
              <Line $h={23} $gap={0}>
                <Label $w={37}>Obiekt</Label>
                <EditCombo $w={160} $h={22}><span>Marsh/Swamp</span><div><Tri /></div></EditCombo>
                <Slot $w={6} />
                <Btn $w={24} $h={23} $off><svg width="12" height="14"><path d="M11 1v12L1 7z" fill="#d5d9dd" stroke="#b5bcc4" /></svg></Btn>
                <Slot $w={6} />
                <Btn $w={24} $h={23}><svg width="12" height="14"><path d="M1 1v12l10-6z" fill="#5b86b8" stroke="#2f5580" /></svg></Btn>
              </Line>
              <Spacer $h={4} />
              <Line $h={18} $gap={0}><Label $w={48}>Podgląd:</Label><LineText>24719,761</LineText></Line>
            </Column>
            <Column $w={22}><VSplitterFill /></Column>
            <Column $w={193}>
              <Line $h={22} $gap={6}>
                <Input $w={107} $h={22}><Icon n="search" s={13} /><LineText>Szukaj...</LineText></Input>
                <Btn $w={80} $h={21} $off>Pokaż pomoc</Btn>
              </Line>
              <Spacer $h={6} />
              <Frame $h={314}>
                <Rows>
                  {functions.map((f, i) => <FnRow key={f} $top={i === 0}><Tri $dir="right" $s={4} />{f}</FnRow>)}
                </Rows>
                <ScrollBar parts={[[270, true], [14, false]]} />
              </Frame>
            </Column>
            <Column $w={13}><VSplitterFill /></Column>
            <Column $w={241}><Frame $h={342} /></Column>
          </Columns>
          <Notice>
            <svg width="33" height="34" viewBox="0 0 33 34"><path d="M19 5c18 2 16 24 3 25l-1 4-5-6z" fill="#888" /><path d="M15 1c20 0 18 25 4 26v5l-6-5C-3 26-4 1 15 1z" fill="#fff" stroke="#333" /><circle cx="15.500" cy="6.500" r="2.500" fill="#00f" /><path d="M11.500 11h6v8h2v2h-8v-2h2v-6h-2z" fill="#00f" /></svg>
            <p>Edytujesz informacje w tej warstwie, ale nie znajduje się ona w trybie edycji. Jeśli klikniesz OK, zostanie automatycznie włączony tryb edycji.</p>
          </Notice>
          <Buttons><Btn $w={79} $h={21} $off>OK</Btn><Btn $w={79} $h={21}>Anuluj</Btn><Btn $w={79} $h={21}>Pomoc</Btn></Buttons>
        </CalcBody>
      </Window>
    </Screen>
  );
}
